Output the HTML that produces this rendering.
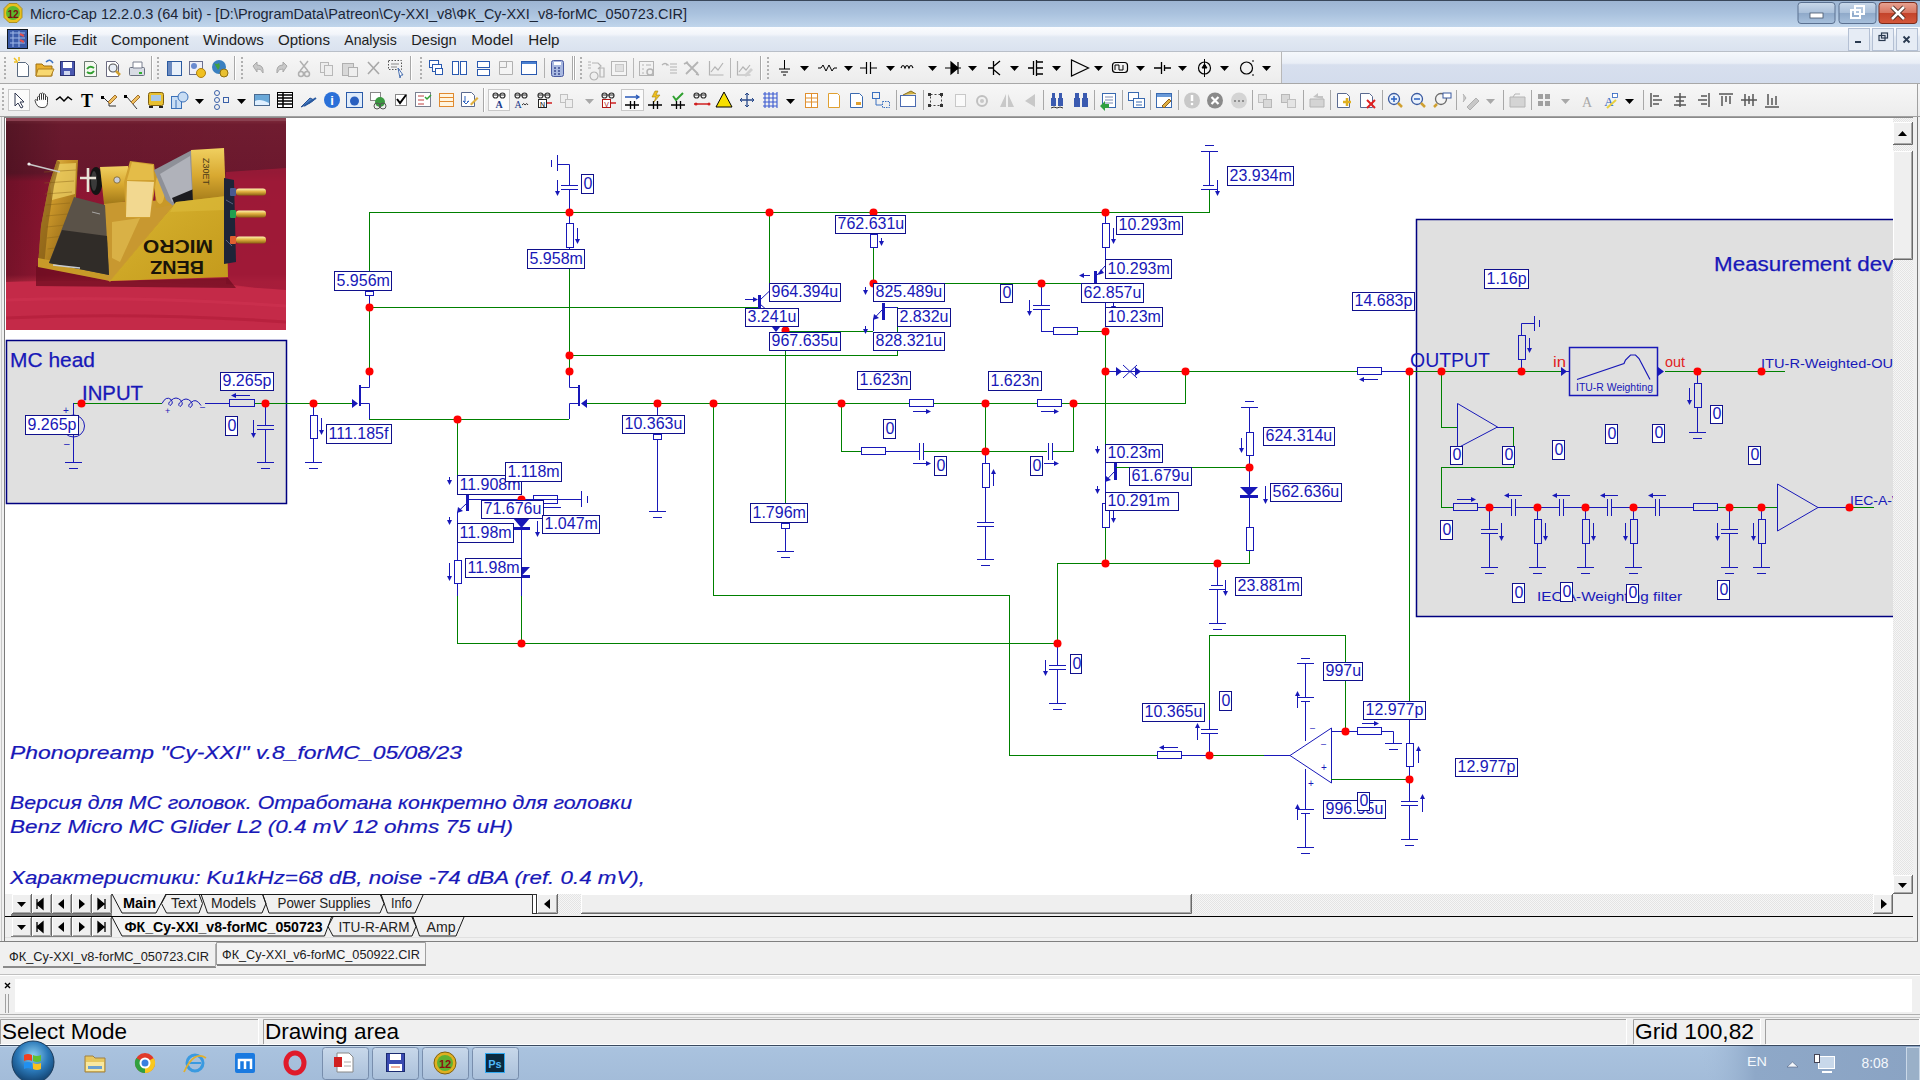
<!DOCTYPE html>
<html><head><meta charset="utf-8"><title>Micro-Cap</title>
<style>html,body{margin:0;padding:0;width:1920px;height:1080px;overflow:hidden;background:#f0f0f0}svg{position:absolute;left:0;top:0;display:block}</style>
</head><body>
<svg width="1920" height="1080" viewBox="0 0 1920 1080">
<defs>
<linearGradient id="gTitle" x1="0" y1="0" x2="0" y2="1"><stop offset="0" stop-color="#9cb4d2"/><stop offset="0.5" stop-color="#aac2de"/><stop offset="1" stop-color="#c0d5eb"/></linearGradient>
<linearGradient id="gMenu" x1="0" y1="0" x2="0" y2="1"><stop offset="0" stop-color="#fbfcfe"/><stop offset="0.3" stop-color="#f2f5fa"/><stop offset="0.42" stop-color="#e2e9f3"/><stop offset="1" stop-color="#dae2ef"/></linearGradient>
<linearGradient id="gTb" x1="0" y1="0" x2="0" y2="1"><stop offset="0" stop-color="#f7f7f7"/><stop offset="1" stop-color="#ececec"/></linearGradient>
<linearGradient id="gTbBlue" x1="0" y1="0" x2="0" y2="1"><stop offset="0" stop-color="#f5f8fc"/><stop offset="0.35" stop-color="#e9eef6"/><stop offset="0.4" stop-color="#d7dfee"/><stop offset="1" stop-color="#d3dcec"/></linearGradient>
<linearGradient id="gMin" x1="0" y1="0" x2="0" y2="1"><stop offset="0" stop-color="#c9d8ea"/><stop offset="0.5" stop-color="#a9bfd9"/><stop offset="0.51" stop-color="#8fa9c9"/><stop offset="1" stop-color="#a7c0dc"/></linearGradient>
<linearGradient id="gClose" x1="0" y1="0" x2="0" y2="1"><stop offset="0" stop-color="#e8a493"/><stop offset="0.5" stop-color="#d7745f"/><stop offset="0.51" stop-color="#c3432a"/><stop offset="1" stop-color="#d4583c"/></linearGradient>
<linearGradient id="gTask" x1="0" y1="0" x2="0" y2="1"><stop offset="0" stop-color="#aac3df"/><stop offset="1" stop-color="#a3bcd9"/></linearGradient>
<linearGradient id="gTray" x1="0" y1="0" x2="1" y2="0"><stop offset="0" stop-color="#a6bfdb" stop-opacity="0"/><stop offset="0.25" stop-color="#8ea8c8"/><stop offset="1" stop-color="#8aa3c3"/></linearGradient>
<linearGradient id="gTaskBtn" x1="0" y1="0" x2="0" y2="1"><stop offset="0" stop-color="#c8d8ea"/><stop offset="1" stop-color="#aac0da"/></linearGradient>
<radialGradient id="gOrb" cx="0.5" cy="0.35" r="0.6"><stop offset="0" stop-color="#8fd0f0"/><stop offset="0.6" stop-color="#2a78b8"/><stop offset="1" stop-color="#164a7a"/></radialGradient>
<pattern id="pDot" width="2" height="2" patternUnits="userSpaceOnUse"><rect width="2" height="2" fill="#f6f6f6"/><rect width="1" height="1" fill="#e4e4e4"/><rect x="1" y="1" width="1" height="1" fill="#e4e4e4"/></pattern>
</defs><rect x="0" y="0" width="1920" height="27" fill="url(#gTitle)" stroke="none" stroke-width="1" shape-rendering="crispEdges"/><line x1="0" y1="0.5" x2="1920" y2="0.5" stroke="#39475a" stroke-width="1" shape-rendering="crispEdges"/><path d="M9 3.5L17 3.5L22 8.5L22 17.5L17 22.5L9 22.5L4 17.5L4 8.5Z" fill="#e8c020" stroke="#a08010" stroke-width="0.8"/><circle cx="13" cy="13" r="7" fill="#5cb82c"/><text x="13" y="17.5" font-family='"Liberation Sans", sans-serif' font-size="10" fill="#7a1010" font-weight="bold" font-style="normal" text-anchor="middle">12</text><text x="30" y="19" font-family='"Liberation Sans", sans-serif' font-size="15" fill="#1b2536" font-weight="normal" font-style="normal" text-anchor="start" textLength="657" lengthAdjust="spacingAndGlyphs">Micro-Cap 12.2.0.3 (64 bit) - [D:\ProgramData\Patreon\Cy-XXI_v8\ФК_Cy-XXI_v8-forMC_050723.CIR]</text><rect x="1798" y="2.5" width="37" height="21" rx="3" fill="url(#gMin)" stroke="#5a7090" stroke-width="1"/><rect x="1810" y="13" width="13" height="5" fill="#fff" stroke="#44546a" stroke-width="0.8"/><rect x="1839" y="2.5" width="37" height="21" rx="3" fill="url(#gMin)" stroke="#5a7090" stroke-width="1"/><rect x="1851" y="10" width="9" height="8" fill="none" stroke="#fff" stroke-width="2"/><rect x="1855" y="6" width="9" height="8" fill="none" stroke="#fff" stroke-width="2"/><rect x="1879" y="2.5" width="38" height="21" rx="3" fill="url(#gClose)" stroke="#7a2a1a" stroke-width="1"/><path d="M1892 7L1904 19M1904 7L1892 19" stroke="#44291f" stroke-width="4.5"/><path d="M1892 7L1904 19M1904 7L1892 19" stroke="#ffffff" stroke-width="2.6"/><rect x="0" y="27" width="1920" height="24" fill="url(#gMenu)" stroke="none" stroke-width="1" shape-rendering="crispEdges"/><rect x="7.5" y="29.5" width="20" height="19" fill="#3a5aa8" stroke="#101820" stroke-width="1"/><path d="M10 33h15M10 38h15M10 43h15M13 31v16M19 31v16" stroke="#a0b8e8" stroke-width="1"/><path d="M20 34l4 2M20 40l4 2" stroke="#e05050" stroke-width="2"/><text x="34" y="45" font-family='"Liberation Sans", sans-serif' font-size="15" fill="#1e1e1e" font-weight="normal" font-style="normal" text-anchor="start" textLength="22.5" lengthAdjust="spacingAndGlyphs">File</text><text x="71.5" y="45" font-family='"Liberation Sans", sans-serif' font-size="15" fill="#1e1e1e" font-weight="normal" font-style="normal" text-anchor="start" textLength="25.25" lengthAdjust="spacingAndGlyphs">Edit</text><text x="111" y="45" font-family='"Liberation Sans", sans-serif' font-size="15" fill="#1e1e1e" font-weight="normal" font-style="normal" text-anchor="start" textLength="77.75" lengthAdjust="spacingAndGlyphs">Component</text><text x="203" y="45" font-family='"Liberation Sans", sans-serif' font-size="15" fill="#1e1e1e" font-weight="normal" font-style="normal" text-anchor="start" textLength="60.75" lengthAdjust="spacingAndGlyphs">Windows</text><text x="278" y="45" font-family='"Liberation Sans", sans-serif' font-size="15" fill="#1e1e1e" font-weight="normal" font-style="normal" text-anchor="start" textLength="52" lengthAdjust="spacingAndGlyphs">Options</text><text x="344.25" y="45" font-family='"Liberation Sans", sans-serif' font-size="15" fill="#1e1e1e" font-weight="normal" font-style="normal" text-anchor="start" textLength="52.5" lengthAdjust="spacingAndGlyphs">Analysis</text><text x="411.25" y="45" font-family='"Liberation Sans", sans-serif' font-size="15" fill="#1e1e1e" font-weight="normal" font-style="normal" text-anchor="start" textLength="45.5" lengthAdjust="spacingAndGlyphs">Design</text><text x="471.25" y="45" font-family='"Liberation Sans", sans-serif' font-size="15" fill="#1e1e1e" font-weight="normal" font-style="normal" text-anchor="start" textLength="42" lengthAdjust="spacingAndGlyphs">Model</text><text x="528.25" y="45" font-family='"Liberation Sans", sans-serif' font-size="15" fill="#1e1e1e" font-weight="normal" font-style="normal" text-anchor="start" textLength="31.25" lengthAdjust="spacingAndGlyphs">Help</text><rect x="1848.5" y="28.5" width="21" height="22" fill="#e6ecf5" stroke="#b4c0d4" stroke-width="1"/><rect x="1872.5" y="28.5" width="21" height="22" fill="#e6ecf5" stroke="#b4c0d4" stroke-width="1"/><rect x="1896.5" y="28.5" width="21" height="22" fill="#e6ecf5" stroke="#b4c0d4" stroke-width="1"/><rect x="1855" y="41" width="6" height="2" fill="#2a3a50"/><rect x="1879" y="35.5" width="6" height="5" fill="none" stroke="#2a3a50" stroke-width="1.2"/><rect x="1881.5" y="33" width="6" height="5" fill="none" stroke="#2a3a50" stroke-width="1.2"/><path d="M1903.5 36.5l6 6M1909.5 36.5l-6 6" stroke="#2a3a50" stroke-width="1.8"/><line x1="0" y1="51.5" x2="1920" y2="51.5" stroke="#b9bfc8" stroke-width="1" shape-rendering="crispEdges"/><rect x="0" y="52" width="1920" height="32" fill="url(#gTbBlue)" stroke="none" stroke-width="1" shape-rendering="crispEdges"/><rect x="0" y="52" width="1281" height="31" fill="url(#gTb)" stroke="none" stroke-width="1" shape-rendering="crispEdges"/><line x1="1281.5" y1="52" x2="1281.5" y2="83" stroke="#b8b8b8" stroke-width="1" shape-rendering="crispEdges"/><line x1="0" y1="83.5" x2="1920" y2="83.5" stroke="#a8a8a8" stroke-width="1" shape-rendering="crispEdges"/><rect x="4" y="57" width="2" height="2" fill="#b0b0b0"/><rect x="4" y="61" width="2" height="2" fill="#b0b0b0"/><rect x="4" y="65" width="2" height="2" fill="#b0b0b0"/><rect x="4" y="69" width="2" height="2" fill="#b0b0b0"/><rect x="4" y="73" width="2" height="2" fill="#b0b0b0"/><rect x="4" y="77" width="2" height="2" fill="#b0b0b0"/><path d="M17.5 62.5h8l3 3v11h-11z" fill="#fff" stroke="#5a6a80"/><path d="M14 58l3 3M19 57v4M14 62h4" stroke="#f0c020" stroke-width="1.5"/><path d="M36 64h6l2 2h8v10h-16z" fill="#e8b030" stroke="#a07010"/><path d="M38 69h16l-3 7h-15z" fill="#f8d870" stroke="#b08020"/><path d="M46 62q4 -4 7 1" fill="none" stroke="#3a70c0" stroke-width="1.5"/><rect x="60.5" y="61.5" width="14" height="14" fill="#4a58b0" stroke="#2a3070"/><rect x="63" y="62" width="9" height="6" fill="#fff"/><rect x="64" y="71" width="6" height="4" fill="#d0d8f0"/><path d="M84.5 61.5h9l3 3v12h-12z" fill="#f4f8f0" stroke="#6a7a70"/><path d="M87 69q3 -4 7 -1M94 71q-3 4 -7 1" fill="none" stroke="#30a030" stroke-width="2"/><path d="M106.5 61.5h9l3 3v12h-12z" fill="#fff" stroke="#6a6a80"/><circle cx="113" cy="68" r="4" fill="#e8eef8" stroke="#555" stroke-width="1.2"/><path d="M116 71l4 4" stroke="#d0a030" stroke-width="2.5"/><rect x="129.5" y="67.5" width="15" height="8" rx="1" fill="#d8dce4" stroke="#6a7080"/><path d="M133 62h9v6h-9z" fill="#fff" stroke="#7a8090"/><rect x="139" y="72" width="3" height="2" fill="#30b030"/><line x1="151.5" y1="56" x2="151.5" y2="80" stroke="#a8a8a8" stroke-width="1" shape-rendering="crispEdges"/><line x1="152.5" y1="56" x2="152.5" y2="80" stroke="#ffffff" stroke-width="1" shape-rendering="crispEdges"/><rect x="157" y="57" width="2" height="2" fill="#b0b0b0"/><rect x="157" y="61" width="2" height="2" fill="#b0b0b0"/><rect x="157" y="65" width="2" height="2" fill="#b0b0b0"/><rect x="157" y="69" width="2" height="2" fill="#b0b0b0"/><rect x="157" y="73" width="2" height="2" fill="#b0b0b0"/><rect x="157" y="77" width="2" height="2" fill="#b0b0b0"/><rect x="167.5" y="61.5" width="14" height="14" fill="#e8f0fa" stroke="#2a5aa0"/><rect x="168" y="62" width="4" height="13" fill="#6a8ac0"/><rect x="189.5" y="61.5" width="13" height="13" fill="#f0f0f8" stroke="#6a7090"/><circle cx="194" cy="66" r="3" fill="#6a8ad0"/><circle cx="201" cy="73" r="4.5" fill="#f0c020" stroke="#b08010"/><circle cx="219" cy="67" r="7" fill="#3a80c0"/><path d="M214 63q3 2 5 0q2 4 -1 7" fill="#40a040"/><circle cx="224" cy="73" r="4" fill="#e8c030" stroke="#907010"/><line x1="234.5" y1="56" x2="234.5" y2="80" stroke="#a8a8a8" stroke-width="1" shape-rendering="crispEdges"/><line x1="235.5" y1="56" x2="235.5" y2="80" stroke="#ffffff" stroke-width="1" shape-rendering="crispEdges"/><rect x="241" y="57" width="2" height="2" fill="#b0b0b0"/><rect x="241" y="61" width="2" height="2" fill="#b0b0b0"/><rect x="241" y="65" width="2" height="2" fill="#b0b0b0"/><rect x="241" y="69" width="2" height="2" fill="#b0b0b0"/><rect x="241" y="73" width="2" height="2" fill="#b0b0b0"/><rect x="241" y="77" width="2" height="2" fill="#b0b0b0"/><path d="M253 66l4-4v3q7 0 6 8q-2-5-6-4v3z" fill="#c8c8c8" stroke="#a8a8a8"/><path d="M287 66l-4-4v3q-7 0-6 8q2-5 6-4v3z" fill="#c8c8c8" stroke="#a8a8a8"/><path d="M300 61l8 10M308 61l-8 10" stroke="#b0b0b0" stroke-width="1.5"/><circle cx="301" cy="74" r="2.5" fill="none" stroke="#b0b0b0" stroke-width="1.5"/><circle cx="307" cy="74" r="2.5" fill="none" stroke="#b0b0b0" stroke-width="1.5"/><rect x="320.5" y="62.5" width="8" height="10" fill="#eee" stroke="#b8b8b8"/><rect x="324.5" y="65.5" width="8" height="10" fill="#eee" stroke="#b8b8b8"/><rect x="342.5" y="63.5" width="11" height="12" fill="#d8d8d8" stroke="#b0b0b0"/><rect x="348.5" y="67.5" width="9" height="9" fill="#eee" stroke="#b0b0b0"/><path d="M368 62l11 12M379 62l-11 12" stroke="#a8a8a8" stroke-width="1.6"/><rect x="388.5" y="60.5" width="13" height="9" fill="none" stroke="#555" stroke-dasharray="1.5 1.5"/><path d="M391 64h8M391 67h6" stroke="#888"/><path d="M398 68l5 7l-2 0l-1 3z" fill="#fff" stroke="#4a70b0"/><line x1="410.5" y1="56" x2="410.5" y2="80" stroke="#a8a8a8" stroke-width="1" shape-rendering="crispEdges"/><line x1="411.5" y1="56" x2="411.5" y2="80" stroke="#ffffff" stroke-width="1" shape-rendering="crispEdges"/><rect x="420" y="57" width="2" height="2" fill="#b0b0b0"/><rect x="420" y="61" width="2" height="2" fill="#b0b0b0"/><rect x="420" y="65" width="2" height="2" fill="#b0b0b0"/><rect x="420" y="69" width="2" height="2" fill="#b0b0b0"/><rect x="420" y="73" width="2" height="2" fill="#b0b0b0"/><rect x="420" y="77" width="2" height="2" fill="#b0b0b0"/><rect x="429.5" y="60.5" width="9" height="7" fill="#fff" stroke="#2a5ab0"/><rect x="432.5" y="64.5" width="9" height="7" fill="#fff" stroke="#2a5ab0"/><rect x="435.5" y="68.5" width="7" height="6" fill="#fff" stroke="#2a5ab0"/><rect x="452.5" y="61.5" width="6" height="13" fill="#fff" stroke="#2a5ab0"/><rect x="460.5" y="61.5" width="6" height="13" fill="#fff" stroke="#2a5ab0"/><rect x="477.5" y="61.5" width="12" height="6" fill="#fff" stroke="#2a5ab0"/><rect x="477.5" y="69.5" width="12" height="6" fill="#fff" stroke="#2a5ab0"/><path d="M499.5 61.5h13v13h-13z M499.5 67.5h7v-6" fill="#f4f4f4" stroke="#b0b0b0"/><rect x="521.5" y="61.5" width="15" height="13" fill="#fff" stroke="#2a5ab0"/><rect x="522" y="62" width="14" height="2" fill="#4a80d0"/><line x1="544.5" y1="58" x2="544.5" y2="78" stroke="#b0b0b0" stroke-width="1" shape-rendering="crispEdges"/><rect x="551.5" y="60.5" width="12" height="16" rx="2" fill="#a8b8e0" stroke="#4a5aa0"/><rect x="554" y="62" width="7" height="3" fill="#fff"/><path d="M554 68h2M558 68h2M554 71h2M558 71h2M554 74h2M558 74h2" stroke="#3a4a90" stroke-width="1.5"/><line x1="572.5" y1="56" x2="572.5" y2="80" stroke="#a8a8a8" stroke-width="1" shape-rendering="crispEdges"/><line x1="573.5" y1="56" x2="573.5" y2="80" stroke="#ffffff" stroke-width="1" shape-rendering="crispEdges"/><line x1="574.5" y1="56" x2="574.5" y2="80" stroke="#a8a8a8" stroke-width="1" shape-rendering="crispEdges"/><line x1="575.5" y1="56" x2="575.5" y2="80" stroke="#ffffff" stroke-width="1" shape-rendering="crispEdges"/><rect x="580" y="57" width="2" height="2" fill="#b0b0b0"/><rect x="580" y="61" width="2" height="2" fill="#b0b0b0"/><rect x="580" y="65" width="2" height="2" fill="#b0b0b0"/><rect x="580" y="69" width="2" height="2" fill="#b0b0b0"/><rect x="580" y="73" width="2" height="2" fill="#b0b0b0"/><rect x="580" y="77" width="2" height="2" fill="#b0b0b0"/><path d="M588 62h3M588 65h3M588 68h3M592 63h6l3 3l-3 3M594 72a4 4 0 1 0 0.1 0M600 68h4v9h-4z" fill="none" stroke="#b4b4b4" stroke-width="1.2"/><rect x="611.5" y="61.5" width="15" height="14" fill="#f4f4f4" stroke="#b4b4b4"/><rect x="615.5" y="64.5" width="8" height="7" fill="#e0e0e0" stroke="#c8c8c8"/><rect x="639.5" y="61.5" width="14" height="14" fill="none" stroke="#b4b4b4"/><path d="M642 65h2M646 65h5M642 69h2M642 73h2" stroke="#b4b4b4"/><circle cx="650" cy="72" r="3" fill="none" stroke="#b4b4b4" stroke-width="1.5"/><path d="M662 65q3-3 6 0l-2 0M670 64h7M670 67h7M670 70h7M670 73h7" fill="none" stroke="#b4b4b4" stroke-width="1.2"/><path d="M686 62l12 12M698 62l-12 12M684 64l4-2M696 74l3 1" stroke="#b4b4b4" stroke-width="1.8"/><path d="M709.5 61v14h14M711 72l4-5l3 3l5-7" fill="none" stroke="#b4b4b4" stroke-width="1.2"/><path d="M737.5 61v14h13M739 72l4-5l3 3l4-5" fill="none" stroke="#b4b4b4" stroke-width="1.2"/><path d="M744 75l7-7l2 2l-7 7z" fill="#d0d0d0"/><line x1="633.5" y1="58" x2="633.5" y2="78" stroke="#b8b8b8" stroke-width="1" shape-rendering="crispEdges"/><line x1="730.5" y1="58" x2="730.5" y2="78" stroke="#b8b8b8" stroke-width="1" shape-rendering="crispEdges"/><line x1="760.5" y1="56" x2="760.5" y2="80" stroke="#a8a8a8" stroke-width="1" shape-rendering="crispEdges"/><line x1="761.5" y1="56" x2="761.5" y2="80" stroke="#ffffff" stroke-width="1" shape-rendering="crispEdges"/><rect x="767" y="57" width="2" height="2" fill="#b0b0b0"/><rect x="767" y="61" width="2" height="2" fill="#b0b0b0"/><rect x="767" y="65" width="2" height="2" fill="#b0b0b0"/><rect x="767" y="69" width="2" height="2" fill="#b0b0b0"/><rect x="767" y="73" width="2" height="2" fill="#b0b0b0"/><rect x="767" y="77" width="2" height="2" fill="#b0b0b0"/><path d="M784.5 60v9M779 69h11M781 72h7M783 75h3" stroke="#000" stroke-width="1"/><path d="M800 66h9l-4.5 5z" fill="#000"/><path d="M818 68h3l2-3l3 6l3-6l3 6l2-3h3" fill="none" stroke="#000"/><path d="M844 66h9l-4.5 5z" fill="#000"/><path d="M860 68h6M866.5 62v12M870.5 62v12M871 68h6" stroke="#000" stroke-width="1.2"/><path d="M886 66h9l-4.5 5z" fill="#000"/><path d="M901 68q2-5 4 0q2-5 4 0q2-5 4 0" fill="none" stroke="#000" stroke-width="1.2"/><path d="M928 66h9l-4.5 5z" fill="#000"/><path d="M945 68h16M951 62v12l7-6z M958 62v12" stroke="#000" stroke-width="1.2" fill="#000"/><path d="M968 66h9l-4.5 5z" fill="#000"/><path d="M988 68h5M993.5 61v14M994 66l6-5M994 70l6 5" stroke="#000" stroke-width="1.3" fill="none"/><path d="M1010 66h9l-4.5 5z" fill="#000"/><path d="M1028 68h5M1033.5 61v14M1036.5 60v16M1037 62h6M1037 68h6M1037 74h6" stroke="#000" stroke-width="1.3" fill="none"/><path d="M1052 66h9l-4.5 5z" fill="#000"/><path d="M1071.5 60v16l17-8z" fill="none" stroke="#000" stroke-width="1.2"/><path d="M1094 66h9l-4.5 5z" fill="#000"/><rect x="1112.5" y="62.5" width="15" height="10" rx="3" fill="none" stroke="#000" stroke-width="1.2"/><path d="M1115 70v-5h4v5h4v-5" fill="none" stroke="#000"/><path d="M1136 66h9l-4.5 5z" fill="#000"/><path d="M1154 68h7M1161.5 62v12M1164.5 65v6M1165 68h6" stroke="#000" stroke-width="1.3"/><path d="M1178 66h9l-4.5 5z" fill="#000"/><circle cx="1204.5" cy="68" r="6" fill="none" stroke="#000" stroke-width="1.2"/><path d="M1204.5 59v18M1202 68l2.5-4l2.5 4z" stroke="#000" fill="#000"/><path d="M1220 66h9l-4.5 5z" fill="#000"/><circle cx="1246.5" cy="68" r="6" fill="none" stroke="#000" stroke-width="1.2"/><path d="M1252 61h2M1252 75h2" stroke="#000"/><path d="M1262 66h9l-4.5 5z" fill="#000"/><rect x="0" y="84" width="1920" height="33" fill="url(#gTb)" stroke="none" stroke-width="1" shape-rendering="crispEdges"/><line x1="1917.5" y1="84" x2="1917.5" y2="116" stroke="#a0a0a0" stroke-width="1" shape-rendering="crispEdges"/><line x1="0" y1="116.5" x2="1920" y2="116.5" stroke="#a0a0a0" stroke-width="1" shape-rendering="crispEdges"/><rect x="2" y="88" width="2" height="2" fill="#b0b0b0"/><rect x="2" y="92" width="2" height="2" fill="#b0b0b0"/><rect x="2" y="96" width="2" height="2" fill="#b0b0b0"/><rect x="2" y="100" width="2" height="2" fill="#b0b0b0"/><rect x="2" y="104" width="2" height="2" fill="#b0b0b0"/><rect x="2" y="108" width="2" height="2" fill="#b0b0b0"/><rect x="8.5" y="89.5" width="21" height="21" fill="#fbfbfb" stroke="#c8c8c8"/><path d="M15 93v13l3-3l3 5l2-1l-3-5h4z" fill="#fff" stroke="#303850"/><path d="M37.5 100.5v-3.5q1-1.2 2 0v3M39.5 99v-5q1-1.2 2 0v5.5M41.5 99.5v-6q1-1.2 2 0v6M43.5 99.5v-5q1-1.2 2 0v5.5M45.5 100v-3q1-1.2 2 0v5.5q0 5-4.5 5h-2q-3.5 0-5-4l-1-3q0-1.2 1.5-0.8l1 1.3" fill="#fff" stroke="#333" stroke-width="0.9"/><path d="M56 100l4-3l4 4l4-4l4 3" fill="none" stroke="#000" stroke-width="1.5"/><text x="87" y="107" font-family='"Liberation Serif", serif' font-size="18" fill="#000" font-weight="bold" font-style="normal" text-anchor="middle">T</text><path d="M101 96h3v3h-3z" fill="#000"/><path d="M104 98l5 5v3h7" fill="none" stroke="#333"/><path d="M108 102l7-7l2 2l-7 7z" fill="#f0c060" stroke="#a07030"/><path d="M124 95h3v3h-3z" fill="#000"/><path d="M127 97l10 12" fill="none" stroke="#333"/><path d="M131 102l7-7l2 2l-7 7z" fill="#f0c060" stroke="#a07030"/><rect x="148.5" y="92.5" width="15" height="13" rx="2" fill="#e8c030" stroke="#806010"/><rect x="151" y="95" width="10" height="6" fill="#a8c8e8"/><path d="M149 107h4M159 107h4" stroke="#222" stroke-width="2"/><rect x="171.5" y="96.5" width="10" height="12" fill="#c8ddf4" stroke="#3a70b8"/><circle cx="183" cy="97" r="5" fill="#c8ddf4" stroke="#3a70b8"/><path d="M176 100v8" stroke="#3a70b8"/><path d="M195 99h9l-4.5 5z" fill="#000"/><circle cx="217" cy="93" r="2.5" fill="none" stroke="#3a60a8"/><circle cx="217" cy="107" r="2.5" fill="none" stroke="#3a60a8"/><circle cx="217" cy="100" r="2.5" fill="none" stroke="#3a60a8"/><rect x="223.5" y="97.5" width="5" height="5" fill="none" stroke="#3a60a8"/><path d="M237 99h9l-4.5 5z" fill="#000"/><rect x="254.5" y="94.5" width="15" height="11" fill="#6aa8d8" stroke="#4a6a90"/><path d="M255 101q5-3 14 2v2h-14z" fill="#e0f0ff"/><rect x="277.5" y="92.5" width="15" height="15" fill="#fff" stroke="#000"/><path d="M278 95h14M278 98h14M278 101h14M278 104h14M283 93v14" stroke="#000" stroke-width="1.5"/><path d="M301 107l9-9l4 2l-4 3z" fill="#4a80c8" stroke="#2a5090"/><path d="M304 106l12-8" stroke="#2a5aa0" stroke-width="2"/><circle cx="332" cy="100" r="8" fill="#2a70d8"/><text x="332" y="105" font-family='"Liberation Sans", sans-serif' font-size="13" fill="#fff" font-weight="bold" font-style="normal" text-anchor="middle">i</text><rect x="346.5" y="92.5" width="16" height="15" fill="#e0ecfa" stroke="#2a5aa8"/><circle cx="354.5" cy="101" r="4.5" fill="#2a60c0"/><rect x="370.5" y="92.5" width="10" height="8" fill="#fff" stroke="#888"/><circle cx="380" cy="102" r="5" fill="#3a9a40"/><circle cx="377" cy="106" r="3" fill="none" stroke="#555"/><circle cx="383" cy="106" r="3" fill="none" stroke="#555"/><rect x="395.5" y="94.5" width="11" height="11" fill="#fff" stroke="#888"/><path d="M397 99l3 4l6-8" fill="none" stroke="#000" stroke-width="2"/><rect x="415.5" y="92.5" width="15" height="14" fill="#fff" stroke="#7a8090"/><path d="M418 96h6M418 100h6M418 104h6" stroke="#c04040"/><path d="M425 97l2 2l4-4" stroke="#30a030" fill="none" stroke-width="1.5"/><rect x="439.5" y="93.5" width="14" height="13" fill="#fff5e0" stroke="#e08a30"/><path d="M440 97.5h13M440 101.5h13" stroke="#e08a30"/><path d="M461.5 92.5h10l3 3v11h-13z" fill="#fff" stroke="#5a6a90"/><path d="M465 96v6l-2-1 3 3 3-3-2 1" stroke="#2a60c0" fill="none"/><path d="M470 104l7-7l1.5 1.5l-7 7z" fill="#e0b040"/><line x1="483.5" y1="88" x2="483.5" y2="112" stroke="#a8a8a8" stroke-width="1" shape-rendering="crispEdges"/><line x1="484.5" y1="88" x2="484.5" y2="112" stroke="#ffffff" stroke-width="1" shape-rendering="crispEdges"/><rect x="488.5" y="89.5" width="21" height="21" fill="#fbfbfb" stroke="#c8c8c8"/><path d="M493 95h12" stroke="#333"/><circle cx="495.5" cy="95.5" r="2.5" fill="none" stroke="#333" stroke-width="1.2"/><circle cx="502.5" cy="95.5" r="2.5" fill="none" stroke="#333" stroke-width="1.2"/><text x="499" y="108" font-family='"Liberation Serif", serif' font-size="10" fill="#1a3a8a" font-weight="bold" font-style="normal" text-anchor="middle">A</text><path d="M515 95h12" stroke="#333"/><circle cx="517.5" cy="95.5" r="2.5" fill="none" stroke="#333" stroke-width="1.2"/><circle cx="524.5" cy="95.5" r="2.5" fill="none" stroke="#333" stroke-width="1.2"/><text x="518" y="108" font-family='"Liberation Serif", serif' font-size="10" fill="#1a3a8a" font-weight="normal" font-style="normal" text-anchor="middle">A</text><path d="M522 105q2-3 3 0q2-3 3 0" stroke="#333" fill="none"/><path d="M538 95h12" stroke="#333"/><circle cx="540.5" cy="95.5" r="2.5" fill="none" stroke="#333" stroke-width="1.2"/><circle cx="547.5" cy="95.5" r="2.5" fill="none" stroke="#333" stroke-width="1.2"/><rect x="538.5" y="99.5" width="8" height="8" fill="#fff" stroke="#222"/><text x="542.5" y="106.5" font-family='"Liberation Sans", sans-serif' font-size="7" fill="#000" font-weight="normal" font-style="normal" text-anchor="middle">N</text><path d="M547 103h5" stroke="#d02020" stroke-width="1.5"/><rect x="560.5" y="94.5" width="7" height="8" fill="#eee" stroke="#c0c0c0"/><rect x="565.5" y="99.5" width="7" height="8" fill="#eee" stroke="#c0c0c0"/><path d="M585 99h9l-4.5 5z" fill="#a8a8a8"/><path d="M602 95h12" stroke="#333"/><circle cx="604.5" cy="95.5" r="2.5" fill="none" stroke="#333" stroke-width="1.2"/><circle cx="611.5" cy="95.5" r="2.5" fill="none" stroke="#333" stroke-width="1.2"/><rect x="602.5" y="99.5" width="8" height="8" fill="#fff" stroke="#b01818"/><text x="606.5" y="106.5" font-family='"Liberation Sans", sans-serif' font-size="7" fill="#b01818" font-weight="normal" font-style="normal" text-anchor="middle">V</text><path d="M611 103h5" stroke="#d02020" stroke-width="1.5"/><rect x="621.5" y="89.5" width="22" height="21" fill="#fbfbfb" stroke="#c8c8c8"/><path d="M625 97h14M636 95l3 2l-3 2" stroke="#2a5ab8" fill="none" stroke-width="1.3"/><path d="M625 105h14M630.5 101v8M634.5 101v8" stroke="#000" stroke-width="1.3"/><path d="M648 105h14M653.5 101v8M657.5 101v8" stroke="#000" stroke-width="1.3"/><path d="M655 91l-3 6h4l-2 5l6-7h-4l2-4z" fill="#f0c020" stroke="#a08010" stroke-width="0.6"/><path d="M671 105h14M676.5 101v8M680.5 101v8" stroke="#000" stroke-width="1.3"/><path d="M673 96l3 4l7-7" fill="none" stroke="#30a030" stroke-width="2"/><path d="M694 95h12" stroke="#333"/><circle cx="696.5" cy="95.5" r="2.5" fill="none" stroke="#333" stroke-width="1.2"/><circle cx="703.5" cy="95.5" r="2.5" fill="none" stroke="#333" stroke-width="1.2"/><path d="M694 104h16" stroke="#d02020" stroke-width="1.5"/><circle cx="696" cy="104" r="1.5" fill="#d02020"/><circle cx="709" cy="104" r="1.5" fill="#d02020"/><path d="M724 92l8 15h-16z" fill="#f8e000" stroke="#000" stroke-width="1"/><path d="M747 93v14M740 100h14" stroke="#2a4a8a" stroke-width="1.3"/><path d="M745 95l2-2l2 2M745 105l2 2l2-2M742 98l-2 2l2 2M752 98l2 2l-2 2" fill="none" stroke="#2a4a8a"/><path d="M763 94h14M763 98h14M763 102h14M763 106h14M765 92v16M769 92v16M773 92v16M777 92v16" stroke="#3a5ad0" stroke-width="1.1"/><path d="M786 99h9l-4.5 5z" fill="#000"/><rect x="805.5" y="93.5" width="12" height="14" fill="#fff" stroke="#e09030"/><path d="M806 98h11M806 102h11M811.5 94v13" stroke="#e09030"/><path d="M828.5 93.5h9l2 2v12h-11z" fill="#fff" stroke="#e0a030"/><path d="M850.5 93.5h9l3 3v11h-12z" fill="#fff" stroke="#3a6ab0"/><rect x="856" y="102" width="5" height="3" fill="#e0a030"/><rect x="872.5" y="92.5" width="7" height="6" fill="none" stroke="#3a70c0"/><rect x="882.5" y="101.5" width="7" height="6" fill="none" stroke="#3a70c0" stroke-dasharray="1.5 1"/><path d="M876 99v6h6" fill="none" stroke="#3a70c0"/><line x1="896.5" y1="90" x2="896.5" y2="110" stroke="#a8a8a8" stroke-width="1" shape-rendering="crispEdges"/><rect x="900.5" y="95.5" width="15" height="11" fill="#fff" stroke="#4a6ab0"/><path d="M903 95l8-4l5 3" fill="#d0b040" stroke="#8a7020"/><line x1="923.5" y1="90" x2="923.5" y2="110" stroke="#a8a8a8" stroke-width="1" shape-rendering="crispEdges"/><rect x="930.5" y="94.5" width="11" height="11" fill="none" stroke="#444" stroke-dasharray="2 2"/><path d="M928 93h3v3h-3zM940 93h3v3h-3zM928 104h3v3h-3zM940 104h3v3h-3z" fill="#333"/><rect x="955.5" y="94.5" width="10" height="12" fill="#fafafa" stroke="#c8c8c8"/><circle cx="982" cy="101" r="5" fill="none" stroke="#c0c0c0" stroke-width="2"/><circle cx="982" cy="101" r="2" fill="#c8c8c8"/><path d="M1006 94v13h-6zM1008 94v13h6z" fill="#c8c8c8"/><path d="M1035 94v13l-10-6zM1035 98h-6" fill="#c8c8c8"/><line x1="1043.5" y1="90" x2="1043.5" y2="110" stroke="#a8a8a8" stroke-width="1" shape-rendering="crispEdges"/><path d="M1051 98h5v8h-5zM1058 98h5v8h-5zM1052 93h3v5h-3zM1059 93h3v5h-3z" fill="#3a5ab0"/><path d="M1051 108q3-2 6 0q3-2 6 0" stroke="#333" fill="none"/><path d="M1074 98h6v9h-6zM1082 98h6v9h-6zM1075 93h4v5h-4zM1083 93h4v5h-4z" fill="#3a5ab0"/><line x1="1094.5" y1="90" x2="1094.5" y2="110" stroke="#a8a8a8" stroke-width="1" shape-rendering="crispEdges"/><rect x="1102.5" y="93.5" width="13" height="14" fill="#fff" stroke="#3a6ab0"/><path d="M1105 97h8M1105 100h8M1105 103h8" stroke="#7a8ab0"/><path d="M1100 106l5-5v3h4v4h-4v3z" fill="#30a040"/><line x1="1122.5" y1="90" x2="1122.5" y2="110" stroke="#a8a8a8" stroke-width="1" shape-rendering="crispEdges"/><rect x="1128.5" y="92.5" width="10" height="8" fill="#fff" stroke="#3a6ab0"/><rect x="1133.5" y="98.5" width="11" height="9" fill="#fff" stroke="#3a6ab0"/><path d="M1136 102h6M1136 105h6" stroke="#3a6ab0"/><line x1="1150.5" y1="90" x2="1150.5" y2="110" stroke="#a8a8a8" stroke-width="1" shape-rendering="crispEdges"/><rect x="1156.5" y="93.5" width="15" height="14" fill="#fff" stroke="#3a6ab0"/><rect x="1157" y="94" width="14" height="3" fill="#6a9ad8"/><path d="M1162 106l7-7l2 2l-7 7z" fill="#e0b040" stroke="#906020"/><line x1="1178.5" y1="90" x2="1178.5" y2="110" stroke="#a8a8a8" stroke-width="1" shape-rendering="crispEdges"/><circle cx="1192" cy="100.5" r="8" fill="#c8c8c8"/><path d="M1192 95v6" stroke="#fff" stroke-width="2.5"/><circle cx="1192" cy="104" r="1.3" fill="#fff"/><circle cx="1215" cy="100.5" r="8" fill="#8a8a8a"/><path d="M1211.5 97l7 7M1218.5 97l-7 7" stroke="#fff" stroke-width="2.2"/><circle cx="1239" cy="100.5" r="8" fill="#d4d4d4"/><path d="M1234 101h2M1238 101h2M1242 101h2" stroke="#909090" stroke-width="2"/><line x1="1252.5" y1="90" x2="1252.5" y2="110" stroke="#a8a8a8" stroke-width="1" shape-rendering="crispEdges"/><rect x="1258.5" y="94.5" width="8" height="8" fill="#e4e4e4" stroke="#c0c0c0"/><rect x="1263.5" y="99.5" width="8" height="8" fill="#d8d8d8" stroke="#b8b8b8"/><rect x="1281.5" y="94.5" width="8" height="8" fill="#d8d8d8" stroke="#b8b8b8"/><rect x="1287.5" y="99.5" width="8" height="8" fill="#e4e4e4" stroke="#c0c0c0"/><line x1="1303.5" y1="90" x2="1303.5" y2="110" stroke="#a8a8a8" stroke-width="1" shape-rendering="crispEdges"/><path d="M1310 99h14v8h-14z" fill="#d4d4d4" stroke="#b4b4b4"/><path d="M1313 97l5-4v3h5v3" fill="#c4c4c4"/><line x1="1330.5" y1="90" x2="1330.5" y2="110" stroke="#a8a8a8" stroke-width="1" shape-rendering="crispEdges"/><path d="M1337.5 93.5h9l3 3v11h-12z" fill="#fff" stroke="#5a6a90"/><path d="M1347 98v8M1343 102h8" stroke="#e0b020" stroke-width="2.5"/><path d="M1360.5 93.5h9l3 3v11h-12z" fill="#fff" stroke="#5a6a90"/><path d="M1367 100l8 8M1375 100l-8 8" stroke="#e02020" stroke-width="2"/><line x1="1382.5" y1="90" x2="1382.5" y2="110" stroke="#a8a8a8" stroke-width="1" shape-rendering="crispEdges"/><circle cx="1394" cy="99" r="5.5" fill="#eaf2fc" stroke="#3a5aa0" stroke-width="1.3"/><path d="M1391 99h6M1394 96v6" stroke="#2a60c0" stroke-width="1.5"/><path d="M1398 103l4 4" stroke="#d0a030" stroke-width="2.5"/><circle cx="1417" cy="99" r="5.5" fill="#eaf2fc" stroke="#3a5aa0" stroke-width="1.3"/><path d="M1414 99h6" stroke="#2a60c0" stroke-width="1.5"/><path d="M1421 103l4 4" stroke="#d0a030" stroke-width="2.5"/><circle cx="1441" cy="99" r="5.5" fill="#f4f4f4" stroke="#6a6a6a" stroke-width="1.3"/><rect x="1443" y="93" width="8" height="5" fill="#fff" stroke="#3a5aa0"/><path d="M1437 104l-3 3" stroke="#d0a030" stroke-width="2.5"/><line x1="1456.5" y1="90" x2="1456.5" y2="110" stroke="#a8a8a8" stroke-width="1" shape-rendering="crispEdges"/><path d="M1463 94l3 4l-3 4M1467 107l9-9l3 3l-9 9z" fill="#c8c8c8" stroke="#b0b0b0"/><path d="M1486 99h9l-4.5 5z" fill="#a8a8a8"/><line x1="1503.5" y1="90" x2="1503.5" y2="110" stroke="#a8a8a8" stroke-width="1" shape-rendering="crispEdges"/><path d="M1510 97h15v10h-15z" fill="#d4d4d4" stroke="#b4b4b4"/><path d="M1513 97l2-3h5" fill="none" stroke="#b4b4b4"/><line x1="1531.5" y1="90" x2="1531.5" y2="110" stroke="#a8a8a8" stroke-width="1" shape-rendering="crispEdges"/><path d="M1538 94h5v5h-5zM1545 94h5v5h-5zM1538 101h5v5h-5zM1545 101h5v5h-5z" fill="#a0a0a0"/><path d="M1561 99h9l-4.5 5z" fill="#a8a8a8"/><text x="1587" y="107" font-family='"Liberation Serif", serif' font-size="14" fill="#a8a8a8" font-weight="normal" font-style="normal" text-anchor="middle">A</text><text x="1609" y="106" font-family='"Liberation Serif", serif' font-size="13" fill="#2a60c0" font-weight="normal" font-style="normal" text-anchor="middle">A</text><rect x="1612.5" y="93.5" width="5" height="4" fill="#fff" stroke="#2a60c0" stroke-width="0.8"/><path d="M1607 108l9-8" stroke="#e8d040" stroke-width="2"/><path d="M1625 99h9l-4.5 5z" fill="#000"/><line x1="1643.5" y1="90" x2="1643.5" y2="110" stroke="#a8a8a8" stroke-width="1" shape-rendering="crispEdges"/><path d="M1651 93v14M1653 96h6M1653 100h9M1653 104h6" stroke="#555" stroke-width="1.5"/><path d="M1680 93v14M1674 97h12M1676 101h8M1674 105h12" stroke="#555" stroke-width="1.5"/><path d="M1709 93v14M1701 96h6M1698 100h9M1701 104h6" stroke="#555" stroke-width="1.5"/><path d="M1719 94h14M1722 96v10M1726 96v6M1730 96v8" stroke="#555" stroke-width="1.5"/><path d="M1741 100h16M1745 94v12M1749 96v8M1753 94v12" stroke="#555" stroke-width="1.5"/><path d="M1765 107h14M1768 94v11M1772 98v7M1776 96v9" stroke="#555" stroke-width="1.5"/><rect x="0" y="117" width="1920" height="850" fill="#f0f0f0" stroke="none" stroke-width="1" shape-rendering="crispEdges"/><line x1="1.5" y1="117" x2="1.5" y2="967" stroke="#c8c8c8" stroke-width="1" shape-rendering="crispEdges"/><line x1="4.5" y1="117" x2="4.5" y2="941" stroke="#7a7a7a" stroke-width="1" shape-rendering="crispEdges"/><rect x="5" y="118" width="1888" height="776" fill="#ffffff" stroke="none" stroke-width="1" shape-rendering="crispEdges"/><line x1="5" y1="117.5" x2="1913" y2="117.5" stroke="#8a8a8a" stroke-width="1" shape-rendering="crispEdges"/><line x1="1917.5" y1="117" x2="1917.5" y2="942" stroke="#7a7a7a" stroke-width="1" shape-rendering="crispEdges"/><defs>
<linearGradient id="phBg" x1="0" y1="0" x2="0" y2="1">
<stop offset="0" stop-color="#843040"/><stop offset="0.03" stop-color="#701c30"/><stop offset="0.26" stop-color="#6c182e"/><stop offset="0.3" stop-color="#921634"/><stop offset="0.74" stop-color="#9c1836"/><stop offset="0.77" stop-color="#c02844"/><stop offset="1" stop-color="#c42c4a"/>
</linearGradient>
<linearGradient id="phLeft" x1="0" y1="0" x2="1" y2="0"><stop offset="0" stop-color="#000" stop-opacity="0.25"/><stop offset="0.2" stop-color="#000" stop-opacity="0.05"/><stop offset="1" stop-color="#000" stop-opacity="0"/></linearGradient>
<linearGradient id="gold1" x1="0" y1="0" x2="1" y2="1"><stop offset="0" stop-color="#f0d060"/><stop offset="0.4" stop-color="#c89428"/><stop offset="1" stop-color="#7a5410"/></linearGradient>
<linearGradient id="gold2" x1="0" y1="0" x2="0" y2="1"><stop offset="0" stop-color="#f0d060"/><stop offset="0.5" stop-color="#d8a830"/><stop offset="1" stop-color="#a07818"/></linearGradient>
<linearGradient id="goldPlate" x1="0" y1="0" x2="1" y2="1"><stop offset="0" stop-color="#d8b430"/><stop offset="1" stop-color="#c49a1c"/></linearGradient>
<linearGradient id="pin" x1="0" y1="0" x2="0" y2="1"><stop offset="0" stop-color="#fff4b0"/><stop offset="0.45" stop-color="#e0b040"/><stop offset="1" stop-color="#8a6010"/></linearGradient>
<clipPath id="phClip"><rect x="6" y="118" width="280" height="212"/></clipPath>
</defs><g clip-path="url(#phClip)"><rect x="6" y="118" width="280" height="212" fill="url(#phBg)"/><rect x="6" y="118" width="280" height="212" fill="url(#phLeft)"/><rect x="6" y="118" width="280" height="3" fill="#8a4050"/><path d="M226 172L286 168V292L226 284Z" fill="#a01a38" opacity="0.8"/><path d="M6 282Q120 278 286 290V330H6Z" fill="#c42a48"/><path d="M6 300Q140 296 286 306" stroke="#d83a5a" stroke-width="3" fill="none" opacity="0.35"/><path d="M6 318Q140 312 286 322" stroke="#a81430" stroke-width="3" fill="none" opacity="0.4"/><path d="M36 266L110 281L228 278L236 288L36 286Z" fill="#6a0c1e" opacity="0.7"/><path d="M57 160L78 160L76 196L74 230L50 264L38 266L41 226L49 185Z" fill="url(#gold1)"/><path d="M58 164L76 163L75 194L52 200L50 186Z" fill="#f0d468" opacity="0.7"/><path d="M44.0 172L76 170" stroke="#8a6418" stroke-width="1" opacity="0.45"/><path d="M44.5 183L74 181" stroke="#8a6418" stroke-width="1" opacity="0.45"/><path d="M45.0 194L72 192" stroke="#8a6418" stroke-width="1" opacity="0.45"/><path d="M45.5 205L70 203" stroke="#8a6418" stroke-width="1" opacity="0.45"/><path d="M46.0 216L68 214" stroke="#8a6418" stroke-width="1" opacity="0.45"/><path d="M46.5 227L66 225" stroke="#8a6418" stroke-width="1" opacity="0.45"/><path d="M47.0 238L64 236" stroke="#8a6418" stroke-width="1" opacity="0.45"/><path d="M47.5 249L62 247" stroke="#8a6418" stroke-width="1" opacity="0.45"/><path d="M57 160L49 185L41 226L38 266L44 266L48 226L54 186L60 162Z" fill="#7a5414" opacity="0.6"/><path d="M38 258L110 272L110 281L38 267Z" fill="#c89a28"/><path d="M104 202L178 200L110 282L104 276Z" fill="#c89830"/><path d="M112 222L140 218L120 262L112 258Z" fill="#e0bc50" opacity="0.7"/><path d="M74 197L105 205L109 275L49 263Z" fill="#5a5248"/><path d="M62 230L107 236L109 275L49 263Z" fill="#302c28"/><path d="M53 265L80 268" stroke="#c8ccd0" stroke-width="1.5"/><path d="M92 212L100 214" stroke="#bbb" stroke-width="0.8"/><ellipse cx="96" cy="181" rx="6.5" ry="14" fill="#141414"/><ellipse cx="94" cy="181" rx="3" ry="10" fill="#3a3a3a"/><path d="M80 178L96 178M88 168L88 192" stroke="#e8e4d8" stroke-width="2.6"/><path d="M100 167L128 166L130 201L104 204Z" fill="url(#gold2)"/><circle cx="117" cy="180" r="3.2" fill="#c8ccd8" stroke="#7a6020" stroke-width="0.8"/><path d="M130 161L154 164L156 182L150 218L126 218L124 182Z" fill="#d0a030"/><path d="M127 181L154 182L150 217L126 217Z" fill="#f2d890"/><path d="M132 162L153 165L154 180L127 180Z" fill="#e4bc48"/><path d="M154 172L174 170L178 204L156 208Z" fill="#c89828"/><ellipse cx="160" cy="189" rx="5" ry="15" fill="#e0b440"/><path d="M154 170L192 150L196 196L178 210L166 200Z" fill="#8e9098"/><path d="M160 174L190 156L192 192L172 202Z" fill="#b0b2ba"/><path d="M172 198L196 188L198 206L178 212Z" fill="#1c1c20"/><path d="M191 150L224 148L226 200L193 204Z" fill="url(#gold2)"/><text x="0" y="0" transform="translate(203,158) rotate(90)" font-family="'Liberation Sans', sans-serif" font-size="9" fill="#4a3a18">Z30ET</text><path d="M110 281L176 202L226 196L228 277Z" fill="url(#goldPlate)"/><path d="M176 202L226 196L226 210L170 212Z" fill="#e0c040" opacity="0.5"/><text transform="translate(213,240) rotate(180)" font-family="'Liberation Sans', sans-serif" font-size="19" font-weight="bold" fill="#1a1408" textLength="70" lengthAdjust="spacingAndGlyphs">MICRO</text><text transform="translate(204,261) rotate(180)" font-family="'Liberation Sans', sans-serif" font-size="19" font-weight="bold" fill="#1a1408" textLength="54" lengthAdjust="spacingAndGlyphs">BENZ</text><path d="M224 178L234 180L236 262L224 264Z" fill="#1e2438"/><path d="M226 200L233 204M226 240L232 246" stroke="#5a6080" stroke-width="1"/><rect x="230" y="188" width="6" height="8" rx="1" fill="#4a5a90"/><rect x="236" y="188.5" width="30" height="7" rx="3" fill="url(#pin)"/><rect x="230" y="210" width="6" height="8" rx="1" fill="#20a050"/><rect x="236" y="210.5" width="30" height="7" rx="3" fill="url(#pin)"/><rect x="230" y="236" width="6" height="8" rx="1" fill="#e06030"/><rect x="236" y="236.5" width="30" height="7" rx="3" fill="url(#pin)"/><path d="M28 164L60 172" stroke="#c8c8c8" stroke-width="1.6"/><circle cx="29" cy="164" r="1.6" fill="#eee"/></g><clipPath id="cvClip"><rect x="5" y="118" width="1888" height="776"/></clipPath><g clip-path="url(#cvClip)"><polyline points="369,212 1105,212" fill="none" stroke="#008000" stroke-width="1" shape-rendering="crispEdges"/><rect x="6.5" y="340.5" width="280" height="163" fill="#e0e0e0" stroke="#000080" stroke-width="1.5"/><rect x="1416.5" y="219.5" width="500" height="397" fill="#e0e0e0" stroke="#000080" stroke-width="1.5"/><polyline points="73,403 162,403" fill="none" stroke="#008000" stroke-width="1" shape-rendering="crispEdges"/><line x1="73.5" y1="403" x2="73.5" y2="462" stroke="#1818b8" stroke-width="1" shape-rendering="crispEdges"/><circle cx="73.5" cy="426" r="11" fill="none" stroke="#1818b8" stroke-width="1"/><text x="63" y="414" font-family='"Liberation Sans", sans-serif' font-size="10" fill="#1818b8" font-weight="normal" font-style="normal" text-anchor="start">+</text><text x="64" y="447" font-family='"Liberation Sans", sans-serif' font-size="10" fill="#1818b8" font-weight="normal" font-style="normal" text-anchor="start">–</text><line x1="65" y1="462.5" x2="82" y2="462.5" stroke="#1818b8" stroke-width="1" shape-rendering="crispEdges"/><line x1="69" y1="468.5" x2="78" y2="468.5" stroke="#1818b8" stroke-width="1" shape-rendering="crispEdges"/><path d="M162 403.5q4-8 9-4q3 4 -1 6q-3 -2 1 -5q5-5 10 0q3 4 -1 6q-3 -2 1 -5q5-5 10 0q3 4 -1 6q-3 -2 1 -5q5-5 10 3" fill="none" stroke="#1818b8" stroke-width="1"/><text x="165" y="414" font-family='"Liberation Sans", sans-serif' font-size="9" fill="#1818b8" font-weight="normal" font-style="normal" text-anchor="start">+</text><text x="200" y="410" font-family='"Liberation Sans", sans-serif' font-size="9" fill="#1818b8" font-weight="normal" font-style="normal" text-anchor="start">–</text><polyline points="205,403 229,403" fill="none" stroke="#1818b8" stroke-width="1" shape-rendering="crispEdges"/><rect x="229.5" y="399.5" width="25" height="7" fill="none" stroke="#1818b8" stroke-width="1" shape-rendering="crispEdges"/><line x1="235" y1="395.5" x2="250" y2="395.5" stroke="#1818b8" stroke-width="1" shape-rendering="crispEdges"/><path d="M236 393L236 398L231 395.5Z" fill="#1818b8"/><polyline points="255,403 355,403" fill="none" stroke="#008000" stroke-width="1" shape-rendering="crispEdges"/><line x1="265.5" y1="403" x2="265.5" y2="425" stroke="#1818b8" stroke-width="1" shape-rendering="crispEdges"/><line x1="257" y1="425.5" x2="274" y2="425.5" stroke="#1818b8" stroke-width="1" shape-rendering="crispEdges"/><line x1="257" y1="429.5" x2="274" y2="429.5" stroke="#1818b8" stroke-width="1" shape-rendering="crispEdges"/><line x1="265.5" y1="429" x2="265.5" y2="462" stroke="#1818b8" stroke-width="1" shape-rendering="crispEdges"/><line x1="257" y1="462.5" x2="274" y2="462.5" stroke="#1818b8" stroke-width="1" shape-rendering="crispEdges"/><line x1="261" y1="468.5" x2="270" y2="468.5" stroke="#1818b8" stroke-width="1" shape-rendering="crispEdges"/><line x1="253.5" y1="420" x2="253.5" y2="434" stroke="#1818b8" stroke-width="1" shape-rendering="crispEdges"/><path d="M251 433L256 433L253.5 438Z" fill="#1818b8"/><line x1="313.5" y1="403" x2="313.5" y2="415" stroke="#1818b8" stroke-width="1" shape-rendering="crispEdges"/><rect x="310.0" y="415.5" width="7" height="23" fill="none" stroke="#1818b8" stroke-width="1" shape-rendering="crispEdges"/><line x1="313.5" y1="439" x2="313.5" y2="462" stroke="#1818b8" stroke-width="1" shape-rendering="crispEdges"/><line x1="305" y1="462.5" x2="322" y2="462.5" stroke="#1818b8" stroke-width="1" shape-rendering="crispEdges"/><line x1="309" y1="468.5" x2="318" y2="468.5" stroke="#1818b8" stroke-width="1" shape-rendering="crispEdges"/><line x1="321.5" y1="418" x2="321.5" y2="431" stroke="#1818b8" stroke-width="1" shape-rendering="crispEdges"/><path d="M319 430L324 430L321.5 435Z" fill="#1818b8"/><polyline points="369,212 369,271" fill="none" stroke="#008000" stroke-width="1" shape-rendering="crispEdges"/><rect x="365.5" y="291.5" width="8" height="4" fill="none" stroke="#1818b8" stroke-width="1" shape-rendering="crispEdges"/><line x1="369.5" y1="295" x2="369.5" y2="307" stroke="#1818b8" stroke-width="1" shape-rendering="crispEdges"/><polyline points="369,307 759,307" fill="none" stroke="#008000" stroke-width="1" shape-rendering="crispEdges"/><polyline points="369,307 369,371" fill="none" stroke="#008000" stroke-width="1" shape-rendering="crispEdges"/><polyline points="369.5,371 369.5,387.5 360.5,387.5" fill="none" stroke="#1818b8"/><rect x="359" y="385" width="2" height="21" fill="#1818b8"/><polyline points="360.5,403.5 369.5,403.5 369.5,419" fill="none" stroke="#1818b8"/><path d="M352 399L358 403.5L352 408Z" fill="#1818b8"/><polyline points="369,419 569,419" fill="none" stroke="#008000" stroke-width="1" shape-rendering="crispEdges"/><polyline points="569,268 569,371" fill="none" stroke="#008000" stroke-width="1" shape-rendering="crispEdges"/><polyline points="569.5,371 569.5,387.5 578.5,387.5" fill="none" stroke="#1818b8"/><rect x="578" y="385" width="2" height="21" fill="#1818b8"/><polyline points="579.5,403.5 569.5,403.5 569.5,419" fill="none" stroke="#1818b8"/><path d="M587 399L581 403.5L587 408Z" fill="#1818b8"/><polyline points="587,403 909,403" fill="none" stroke="#008000" stroke-width="1" shape-rendering="crispEdges"/><polyline points="557.5,155 557.5,171" fill="none" stroke="#1818b8"/><line x1="551.5" y1="160" x2="551.5" y2="167" stroke="#1818b8" stroke-width="1" shape-rendering="crispEdges"/><polyline points="557.5,164.5 569.5,164.5 569.5,185" fill="none" stroke="#1818b8"/><line x1="561" y1="185.5" x2="578" y2="185.5" stroke="#1818b8" stroke-width="1" shape-rendering="crispEdges"/><line x1="561" y1="189.5" x2="578" y2="189.5" stroke="#1818b8" stroke-width="1" shape-rendering="crispEdges"/><line x1="569.5" y1="189" x2="569.5" y2="212" stroke="#1818b8" stroke-width="1" shape-rendering="crispEdges"/><line x1="557.5" y1="180" x2="557.5" y2="192" stroke="#1818b8" stroke-width="1" shape-rendering="crispEdges"/><path d="M555 191L560 191L557.5 196Z" fill="#1818b8"/><line x1="569.5" y1="212" x2="569.5" y2="223" stroke="#1818b8" stroke-width="1" shape-rendering="crispEdges"/><rect x="566.0" y="223.5" width="7" height="24" fill="none" stroke="#1818b8" stroke-width="1" shape-rendering="crispEdges"/><line x1="569.5" y1="248" x2="569.5" y2="249" stroke="#1818b8" stroke-width="1" shape-rendering="crispEdges"/><line x1="577.5" y1="228" x2="577.5" y2="240" stroke="#1818b8" stroke-width="1" shape-rendering="crispEdges"/><path d="M575 239L580 239L577.5 244Z" fill="#1818b8"/><polyline points="457,419 457,475" fill="none" stroke="#008000" stroke-width="1" shape-rendering="crispEdges"/><line x1="449.5" y1="477" x2="449.5" y2="482" stroke="#1818b8" stroke-width="1" shape-rendering="crispEdges"/><path d="M447 480L452 480L449.5 485Z" fill="#1818b8"/><rect x="466" y="495" width="3" height="16" fill="#1818b8"/><line x1="467" y1="499.5" x2="581" y2="499.5" stroke="#1818b8" stroke-width="1" shape-rendering="crispEdges"/><rect x="533.5" y="495.5" width="24" height="8" fill="none" stroke="#1818b8" stroke-width="1" shape-rendering="crispEdges"/><line x1="581.5" y1="491" x2="581.5" y2="507" stroke="#1818b8" stroke-width="1" shape-rendering="crispEdges"/><line x1="587.5" y1="496" x2="587.5" y2="503" stroke="#1818b8" stroke-width="1" shape-rendering="crispEdges"/><path d="M466 504L457.5 512" stroke="#1818b8"/><path d="M457 513l1-6l5 4z" fill="#1818b8"/><line x1="544" y1="507.5" x2="561" y2="507.5" stroke="#1818b8" stroke-width="1" shape-rendering="crispEdges"/><path d="M513 518h17l-8.5 10z" fill="#1818b8"/><rect x="513" y="527" width="17" height="3" fill="#1818b8"/><line x1="537.5" y1="521" x2="537.5" y2="533" stroke="#1818b8" stroke-width="1" shape-rendering="crispEdges"/><path d="M535 532L540 532L537.5 537Z" fill="#1818b8"/><line x1="457.5" y1="512" x2="457.5" y2="560" stroke="#1818b8" stroke-width="1" shape-rendering="crispEdges"/><line x1="449.5" y1="517" x2="449.5" y2="522" stroke="#1818b8" stroke-width="1" shape-rendering="crispEdges"/><path d="M447 520L452 520L449.5 525Z" fill="#1818b8"/><rect x="454.0" y="560.5" width="7" height="23" fill="none" stroke="#1818b8" stroke-width="1" shape-rendering="crispEdges"/><line x1="449.5" y1="563" x2="449.5" y2="577" stroke="#1818b8" stroke-width="1" shape-rendering="crispEdges"/><path d="M447 576L452 576L449.5 581Z" fill="#1818b8"/><line x1="457.5" y1="584" x2="457.5" y2="596" stroke="#1818b8" stroke-width="1" shape-rendering="crispEdges"/><polyline points="457,596 457,643 1057,643" fill="none" stroke="#008000" stroke-width="1" shape-rendering="crispEdges"/><line x1="521.5" y1="528" x2="521.5" y2="596" stroke="#1818b8" stroke-width="1" shape-rendering="crispEdges"/><path d="M521.5 567L530 567L521.5 576Z" fill="#1818b8"/><rect x="521" y="575" width="9" height="3" fill="#1818b8"/><polyline points="521,596 521,643" fill="none" stroke="#008000" stroke-width="1" shape-rendering="crispEdges"/><line x1="657.5" y1="403" x2="657.5" y2="416" stroke="#1818b8" stroke-width="1" shape-rendering="crispEdges"/><rect x="653.5" y="434.5" width="8" height="5" fill="none" stroke="#1818b8" stroke-width="1" shape-rendering="crispEdges"/><line x1="657.5" y1="440" x2="657.5" y2="511" stroke="#1818b8" stroke-width="1" shape-rendering="crispEdges"/><line x1="649" y1="511.5" x2="666" y2="511.5" stroke="#1818b8" stroke-width="1" shape-rendering="crispEdges"/><line x1="653" y1="517.5" x2="662" y2="517.5" stroke="#1818b8" stroke-width="1" shape-rendering="crispEdges"/><polyline points="713,403 713,595 1009,595 1009,755 1157,755" fill="none" stroke="#008000" stroke-width="1" shape-rendering="crispEdges"/><polyline points="769,212 769,283" fill="none" stroke="#008000" stroke-width="1" shape-rendering="crispEdges"/><line x1="769.5" y1="283" x2="769.5" y2="291" stroke="#1818b8" stroke-width="1" shape-rendering="crispEdges"/><rect x="758" y="295" width="3" height="13" fill="#1818b8"/><path d="M760 300L769.5 291M760 304L769 312" stroke="#1818b8"/><line x1="745" y1="299.5" x2="754" y2="299.5" stroke="#1818b8" stroke-width="1" shape-rendering="crispEdges"/><path d="M753 297L753 302L758 299.5Z" fill="#1818b8"/><path d="M772 327h8l-4 5z" fill="#1818b8"/><polyline points="785,331 873,331" fill="none" stroke="#008000" stroke-width="1" shape-rendering="crispEdges"/><polyline points="785,351 785,503" fill="none" stroke="#008000" stroke-width="1" shape-rendering="crispEdges"/><polyline points="569,355 897,355 897,307" fill="none" stroke="#008000" stroke-width="1" shape-rendering="crispEdges"/><rect x="781.5" y="523.5" width="8" height="5" fill="none" stroke="#1818b8" stroke-width="1" shape-rendering="crispEdges"/><line x1="785.5" y1="528" x2="785.5" y2="551" stroke="#1818b8" stroke-width="1" shape-rendering="crispEdges"/><line x1="777" y1="551.5" x2="794" y2="551.5" stroke="#1818b8" stroke-width="1" shape-rendering="crispEdges"/><line x1="781" y1="557.5" x2="790" y2="557.5" stroke="#1818b8" stroke-width="1" shape-rendering="crispEdges"/><rect x="870.0" y="234.5" width="7" height="13" fill="none" stroke="#1818b8" stroke-width="1" shape-rendering="crispEdges"/><line x1="881.5" y1="238" x2="881.5" y2="243" stroke="#1818b8" stroke-width="1" shape-rendering="crispEdges"/><path d="M879 241L884 241L881.5 246Z" fill="#1818b8"/><polyline points="873,248 873,283 1095,283" fill="none" stroke="#008000" stroke-width="1" shape-rendering="crispEdges"/><rect x="882" y="303" width="3" height="17" fill="#1818b8"/><path d="M882 310L873.5 319" stroke="#1818b8"/><path d="M873 320l1-6l5 4z" fill="#1818b8"/><line x1="873.5" y1="319" x2="873.5" y2="331" stroke="#1818b8" stroke-width="1" shape-rendering="crispEdges"/><line x1="884" y1="307.5" x2="897" y2="307.5" stroke="#1818b8" stroke-width="1" shape-rendering="crispEdges"/><line x1="865.5" y1="287" x2="865.5" y2="292" stroke="#1818b8" stroke-width="1" shape-rendering="crispEdges"/><path d="M863 290L868 290L865.5 295Z" fill="#1818b8"/><line x1="865.5" y1="326" x2="865.5" y2="331" stroke="#1818b8" stroke-width="1" shape-rendering="crispEdges"/><path d="M863 329L868 329L865.5 334Z" fill="#1818b8"/><rect x="909.5" y="399.5" width="24" height="7" fill="none" stroke="#1818b8" stroke-width="1" shape-rendering="crispEdges"/><line x1="913" y1="411.5" x2="927" y2="411.5" stroke="#1818b8" stroke-width="1" shape-rendering="crispEdges"/><path d="M926 409L926 414L931 411.5Z" fill="#1818b8"/><polyline points="934,403 1037,403" fill="none" stroke="#008000" stroke-width="1" shape-rendering="crispEdges"/><polyline points="841,403 841,451 861,451" fill="none" stroke="#008000" stroke-width="1" shape-rendering="crispEdges"/><rect x="861.5" y="447.5" width="24" height="7" fill="none" stroke="#1818b8" stroke-width="1" shape-rendering="crispEdges"/><line x1="886" y1="451.5" x2="919" y2="451.5" stroke="#1818b8" stroke-width="1" shape-rendering="crispEdges"/><line x1="919.5" y1="443" x2="919.5" y2="460" stroke="#1818b8" stroke-width="1" shape-rendering="crispEdges"/><line x1="923.5" y1="443" x2="923.5" y2="460" stroke="#1818b8" stroke-width="1" shape-rendering="crispEdges"/><polyline points="924,451 985,451" fill="none" stroke="#008000" stroke-width="1" shape-rendering="crispEdges"/><line x1="913" y1="463.5" x2="927" y2="463.5" stroke="#1818b8" stroke-width="1" shape-rendering="crispEdges"/><path d="M926 461L926 466L931 463.5Z" fill="#1818b8"/><polyline points="985,403 985,451" fill="none" stroke="#008000" stroke-width="1" shape-rendering="crispEdges"/><line x1="985.5" y1="451" x2="985.5" y2="463" stroke="#1818b8" stroke-width="1" shape-rendering="crispEdges"/><rect x="982.0" y="463.5" width="7" height="24" fill="none" stroke="#1818b8" stroke-width="1" shape-rendering="crispEdges"/><line x1="993.5" y1="473" x2="993.5" y2="486" stroke="#1818b8" stroke-width="1" shape-rendering="crispEdges"/><path d="M991 474L996 474L993.5 469Z" fill="#1818b8"/><line x1="985.5" y1="488" x2="985.5" y2="522" stroke="#1818b8" stroke-width="1" shape-rendering="crispEdges"/><line x1="977" y1="522.5" x2="994" y2="522.5" stroke="#1818b8" stroke-width="1" shape-rendering="crispEdges"/><line x1="977" y1="526.5" x2="994" y2="526.5" stroke="#1818b8" stroke-width="1" shape-rendering="crispEdges"/><line x1="985.5" y1="526" x2="985.5" y2="559" stroke="#1818b8" stroke-width="1" shape-rendering="crispEdges"/><line x1="977" y1="559.5" x2="994" y2="559.5" stroke="#1818b8" stroke-width="1" shape-rendering="crispEdges"/><line x1="981" y1="565.5" x2="990" y2="565.5" stroke="#1818b8" stroke-width="1" shape-rendering="crispEdges"/><rect x="1037.5" y="399.5" width="24" height="7" fill="none" stroke="#1818b8" stroke-width="1" shape-rendering="crispEdges"/><line x1="1041" y1="411.5" x2="1055" y2="411.5" stroke="#1818b8" stroke-width="1" shape-rendering="crispEdges"/><path d="M1054 409L1054 414L1059 411.5Z" fill="#1818b8"/><polyline points="1062,403 1185,403 1185,371" fill="none" stroke="#008000" stroke-width="1" shape-rendering="crispEdges"/><polyline points="1073,403 1073,451 1052,451" fill="none" stroke="#008000" stroke-width="1" shape-rendering="crispEdges"/><line x1="1048.0" y1="443" x2="1048.0" y2="460" stroke="#1818b8" stroke-width="1" shape-rendering="crispEdges"/><line x1="1052.0" y1="443" x2="1052.0" y2="460" stroke="#1818b8" stroke-width="1" shape-rendering="crispEdges"/><polyline points="1047,451 985,451" fill="none" stroke="#008000" stroke-width="1" shape-rendering="crispEdges"/><line x1="1044" y1="463.5" x2="1055" y2="463.5" stroke="#1818b8" stroke-width="1" shape-rendering="crispEdges"/><path d="M1054 461L1054 466L1059 463.5Z" fill="#1818b8"/><polyline points="1105,212 1209,212 1209,189" fill="none" stroke="#008000" stroke-width="1" shape-rendering="crispEdges"/><line x1="1201" y1="189.5" x2="1218" y2="189.5" stroke="#1818b8" stroke-width="1" shape-rendering="crispEdges"/><line x1="1203" y1="185.5" x2="1214" y2="185.5" stroke="#1818b8" stroke-width="1" shape-rendering="crispEdges"/><line x1="1209.5" y1="151" x2="1209.5" y2="185" stroke="#1818b8" stroke-width="1" shape-rendering="crispEdges"/><line x1="1201" y1="151.5" x2="1218" y2="151.5" stroke="#1818b8" stroke-width="1" shape-rendering="crispEdges"/><line x1="1205" y1="145.5" x2="1214" y2="145.5" stroke="#1818b8" stroke-width="1" shape-rendering="crispEdges"/><line x1="1217.5" y1="180" x2="1217.5" y2="192" stroke="#1818b8" stroke-width="1" shape-rendering="crispEdges"/><path d="M1215 191L1220 191L1217.5 196Z" fill="#1818b8"/><line x1="1105.5" y1="212" x2="1105.5" y2="223" stroke="#1818b8" stroke-width="1" shape-rendering="crispEdges"/><rect x="1102.0" y="223.5" width="7" height="24" fill="none" stroke="#1818b8" stroke-width="1" shape-rendering="crispEdges"/><line x1="1113.5" y1="228" x2="1113.5" y2="240" stroke="#1818b8" stroke-width="1" shape-rendering="crispEdges"/><path d="M1111 239L1116 239L1113.5 244Z" fill="#1818b8"/><line x1="1105.5" y1="248" x2="1105.5" y2="265" stroke="#1818b8" stroke-width="1" shape-rendering="crispEdges"/><rect x="1094" y="271" width="3" height="12" fill="#1818b8"/><path d="M1097 275L1105 266" stroke="#1818b8"/><path d="M1098 275l6-2l-3 -4z" fill="#1818b8"/><line x1="1083" y1="275.5" x2="1090" y2="275.5" stroke="#1818b8" stroke-width="1" shape-rendering="crispEdges"/><path d="M1084 273L1084 278L1079 275.5Z" fill="#1818b8"/><line x1="1041.5" y1="283" x2="1041.5" y2="305" stroke="#1818b8" stroke-width="1" shape-rendering="crispEdges"/><line x1="1033" y1="305.5" x2="1050" y2="305.5" stroke="#1818b8" stroke-width="1" shape-rendering="crispEdges"/><line x1="1033" y1="309.5" x2="1050" y2="309.5" stroke="#1818b8" stroke-width="1" shape-rendering="crispEdges"/><line x1="1041.5" y1="309" x2="1041.5" y2="331.5" stroke="#1818b8" stroke-width="1" shape-rendering="crispEdges"/><line x1="1041" y1="331.5" x2="1053" y2="331.5" stroke="#1818b8" stroke-width="1" shape-rendering="crispEdges"/><rect x="1053.5" y="327.5" width="24" height="7" fill="none" stroke="#1818b8" stroke-width="1" shape-rendering="crispEdges"/><polyline points="1077,331 1105,331" fill="none" stroke="#008000" stroke-width="1" shape-rendering="crispEdges"/><line x1="1029.5" y1="300" x2="1029.5" y2="312" stroke="#1818b8" stroke-width="1" shape-rendering="crispEdges"/><path d="M1027 311L1032 311L1029.5 316Z" fill="#1818b8"/><line x1="1105.5" y1="283" x2="1105.5" y2="307" stroke="#1818b8" stroke-width="1" shape-rendering="crispEdges"/><line x1="1113.5" y1="303" x2="1113.5" y2="308" stroke="#1818b8" stroke-width="1" shape-rendering="crispEdges"/><path d="M1111 306L1116 306L1113.5 311Z" fill="#1818b8"/><polyline points="1105,331 1105,444" fill="none" stroke="#008000" stroke-width="1" shape-rendering="crispEdges"/><line x1="1105" y1="371.5" x2="1160" y2="371.5" stroke="#1818b8" stroke-width="1" shape-rendering="crispEdges"/><path d="M1116 367L1122 371.5L1116 376Z" fill="#1818b8"/><path d="M1135 367L1141 371.5L1135 376Z" fill="#1818b8"/><path d="M1123 365L1137 378M1137 365L1123 378" stroke="#1818b8"/><polyline points="1160,371 1357,371" fill="none" stroke="#008000" stroke-width="1" shape-rendering="crispEdges"/><rect x="1357.5" y="367.5" width="24" height="7" fill="none" stroke="#1818b8" stroke-width="1" shape-rendering="crispEdges"/><line x1="1363" y1="379.5" x2="1378" y2="379.5" stroke="#1818b8" stroke-width="1" shape-rendering="crispEdges"/><path d="M1364 377L1364 382L1359 379.5Z" fill="#1818b8"/><line x1="1382" y1="371.5" x2="1409" y2="371.5" stroke="#1818b8" stroke-width="1" shape-rendering="crispEdges"/><polyline points="1409,371 1561,371" fill="none" stroke="#008000" stroke-width="1" shape-rendering="crispEdges"/><line x1="1097.5" y1="446" x2="1097.5" y2="451" stroke="#1818b8" stroke-width="1" shape-rendering="crispEdges"/><path d="M1095 449L1100 449L1097.5 454Z" fill="#1818b8"/><line x1="1105.5" y1="463" x2="1105.5" y2="492" stroke="#1818b8" stroke-width="1" shape-rendering="crispEdges"/><rect x="1114" y="463" width="3" height="17" fill="#1818b8"/><polyline points="1116,467 1249,467" fill="none" stroke="#008000" stroke-width="1" shape-rendering="crispEdges"/><path d="M1114 472L1105.5 481" stroke="#1818b8"/><path d="M1105 482l1-6l5 4z" fill="#1818b8"/><line x1="1097.5" y1="486" x2="1097.5" y2="491" stroke="#1818b8" stroke-width="1" shape-rendering="crispEdges"/><path d="M1095 489L1100 489L1097.5 494Z" fill="#1818b8"/><rect x="1102.0" y="503.5" width="7" height="24" fill="none" stroke="#1818b8" stroke-width="1" shape-rendering="crispEdges"/><line x1="1113.5" y1="507" x2="1113.5" y2="519" stroke="#1818b8" stroke-width="1" shape-rendering="crispEdges"/><path d="M1111 518L1116 518L1113.5 523Z" fill="#1818b8"/><polyline points="1105,528 1105,563" fill="none" stroke="#008000" stroke-width="1" shape-rendering="crispEdges"/><line x1="1245" y1="401.5" x2="1254" y2="401.5" stroke="#1818b8" stroke-width="1" shape-rendering="crispEdges"/><line x1="1241" y1="407.5" x2="1258" y2="407.5" stroke="#1818b8" stroke-width="1" shape-rendering="crispEdges"/><line x1="1249.5" y1="407" x2="1249.5" y2="432" stroke="#1818b8" stroke-width="1" shape-rendering="crispEdges"/><rect x="1246.0" y="432.5" width="7" height="23" fill="none" stroke="#1818b8" stroke-width="1" shape-rendering="crispEdges"/><line x1="1249.5" y1="456" x2="1249.5" y2="487" stroke="#1818b8" stroke-width="1" shape-rendering="crispEdges"/><line x1="1241.5" y1="438" x2="1241.5" y2="449" stroke="#1818b8" stroke-width="1" shape-rendering="crispEdges"/><path d="M1239 448L1244 448L1241.5 453Z" fill="#1818b8"/><path d="M1240 487h18l-9 9z" fill="#1818b8"/><rect x="1240" y="495" width="18" height="3" fill="#1818b8"/><line x1="1265.5" y1="486" x2="1265.5" y2="500" stroke="#1818b8" stroke-width="1" shape-rendering="crispEdges"/><path d="M1263 499L1268 499L1265.5 504Z" fill="#1818b8"/><line x1="1249.5" y1="498" x2="1249.5" y2="527" stroke="#1818b8" stroke-width="1" shape-rendering="crispEdges"/><rect x="1246.0" y="527.5" width="7" height="23" fill="none" stroke="#1818b8" stroke-width="1" shape-rendering="crispEdges"/><polyline points="1249,551 1249,563 1057,563 1057,643" fill="none" stroke="#008000" stroke-width="1" shape-rendering="crispEdges"/><line x1="1217.5" y1="563" x2="1217.5" y2="585" stroke="#1818b8" stroke-width="1" shape-rendering="crispEdges"/><line x1="1211" y1="585.5" x2="1223" y2="585.5" stroke="#1818b8" stroke-width="1" shape-rendering="crispEdges"/><line x1="1209" y1="589.5" x2="1226" y2="589.5" stroke="#1818b8" stroke-width="1" shape-rendering="crispEdges"/><line x1="1217.5" y1="589" x2="1217.5" y2="623" stroke="#1818b8" stroke-width="1" shape-rendering="crispEdges"/><line x1="1209" y1="623.5" x2="1226" y2="623.5" stroke="#1818b8" stroke-width="1" shape-rendering="crispEdges"/><line x1="1213" y1="629.5" x2="1222" y2="629.5" stroke="#1818b8" stroke-width="1" shape-rendering="crispEdges"/><line x1="1225.5" y1="580" x2="1225.5" y2="592" stroke="#1818b8" stroke-width="1" shape-rendering="crispEdges"/><path d="M1223 591L1228 591L1225.5 596Z" fill="#1818b8"/><line x1="1057.5" y1="643" x2="1057.5" y2="666" stroke="#1818b8" stroke-width="1" shape-rendering="crispEdges"/><line x1="1049" y1="665.5" x2="1066" y2="665.5" stroke="#1818b8" stroke-width="1" shape-rendering="crispEdges"/><line x1="1049" y1="669.5" x2="1066" y2="669.5" stroke="#1818b8" stroke-width="1" shape-rendering="crispEdges"/><line x1="1057.5" y1="669" x2="1057.5" y2="703" stroke="#1818b8" stroke-width="1" shape-rendering="crispEdges"/><line x1="1049" y1="703.5" x2="1066" y2="703.5" stroke="#1818b8" stroke-width="1" shape-rendering="crispEdges"/><line x1="1053" y1="709.5" x2="1062" y2="709.5" stroke="#1818b8" stroke-width="1" shape-rendering="crispEdges"/><line x1="1045.5" y1="660" x2="1045.5" y2="672" stroke="#1818b8" stroke-width="1" shape-rendering="crispEdges"/><path d="M1043 671L1048 671L1045.5 676Z" fill="#1818b8"/><rect x="1157.5" y="751.5" width="24" height="7" fill="none" stroke="#1818b8" stroke-width="1" shape-rendering="crispEdges"/><line x1="1163" y1="747.5" x2="1178" y2="747.5" stroke="#1818b8" stroke-width="1" shape-rendering="crispEdges"/><path d="M1164 745L1164 750L1159 747.5Z" fill="#1818b8"/><line x1="1182" y1="755.5" x2="1209" y2="755.5" stroke="#1818b8" stroke-width="1" shape-rendering="crispEdges"/><polyline points="1209,755 1264,755" fill="none" stroke="#008000" stroke-width="1" shape-rendering="crispEdges"/><line x1="1264" y1="755.5" x2="1290" y2="755.5" stroke="#1818b8" stroke-width="1" shape-rendering="crispEdges"/><polyline points="1209,720 1209,635 1345,635 1345,731" fill="none" stroke="#008000" stroke-width="1" shape-rendering="crispEdges"/><line x1="1209.5" y1="720" x2="1209.5" y2="729" stroke="#1818b8" stroke-width="1" shape-rendering="crispEdges"/><line x1="1201" y1="729.5" x2="1218" y2="729.5" stroke="#1818b8" stroke-width="1" shape-rendering="crispEdges"/><line x1="1201" y1="733.5" x2="1218" y2="733.5" stroke="#1818b8" stroke-width="1" shape-rendering="crispEdges"/><line x1="1209.5" y1="733" x2="1209.5" y2="755" stroke="#1818b8" stroke-width="1" shape-rendering="crispEdges"/><line x1="1197.5" y1="727" x2="1197.5" y2="740" stroke="#1818b8" stroke-width="1" shape-rendering="crispEdges"/><path d="M1195 728L1200 728L1197.5 723Z" fill="#1818b8"/><path d="M1290 755.5L1331.5 728V783Z" fill="none" stroke="#1818b8"/><line x1="1331" y1="731.5" x2="1345" y2="731.5" stroke="#1818b8" stroke-width="1" shape-rendering="crispEdges"/><line x1="1345" y1="731.5" x2="1357" y2="731.5" stroke="#1818b8" stroke-width="1" shape-rendering="crispEdges"/><rect x="1357.5" y="727.5" width="24" height="7" fill="none" stroke="#1818b8" stroke-width="1" shape-rendering="crispEdges"/><line x1="1362" y1="723.5" x2="1375" y2="723.5" stroke="#1818b8" stroke-width="1" shape-rendering="crispEdges"/><path d="M1374 721L1374 726L1379 723.5Z" fill="#1818b8"/><polyline points="1382,731.5 1393.5,731.5 1393.5,743" fill="none" stroke="#1818b8"/><line x1="1385" y1="743.5" x2="1402" y2="743.5" stroke="#1818b8" stroke-width="1" shape-rendering="crispEdges"/><line x1="1389" y1="749.5" x2="1398" y2="749.5" stroke="#1818b8" stroke-width="1" shape-rendering="crispEdges"/><polyline points="1331,779 1409,779" fill="none" stroke="#008000" stroke-width="1" shape-rendering="crispEdges"/><line x1="1301" y1="658.5" x2="1310" y2="658.5" stroke="#1818b8" stroke-width="1" shape-rendering="crispEdges"/><line x1="1297" y1="663.5" x2="1314" y2="663.5" stroke="#1818b8" stroke-width="1" shape-rendering="crispEdges"/><line x1="1305.5" y1="663" x2="1305.5" y2="697" stroke="#1818b8" stroke-width="1" shape-rendering="crispEdges"/><line x1="1297" y1="697.5" x2="1314" y2="697.5" stroke="#1818b8" stroke-width="1" shape-rendering="crispEdges"/><line x1="1301" y1="701.5" x2="1310" y2="701.5" stroke="#1818b8" stroke-width="1" shape-rendering="crispEdges"/><line x1="1305.5" y1="701" x2="1305.5" y2="741" stroke="#1818b8" stroke-width="1" shape-rendering="crispEdges"/><line x1="1297.5" y1="695" x2="1297.5" y2="708" stroke="#1818b8" stroke-width="1" shape-rendering="crispEdges"/><path d="M1295 696L1300 696L1297.5 691Z" fill="#1818b8"/><line x1="1305.5" y1="769" x2="1305.5" y2="809" stroke="#1818b8" stroke-width="1" shape-rendering="crispEdges"/><line x1="1297" y1="809.5" x2="1314" y2="809.5" stroke="#1818b8" stroke-width="1" shape-rendering="crispEdges"/><line x1="1301" y1="813.5" x2="1310" y2="813.5" stroke="#1818b8" stroke-width="1" shape-rendering="crispEdges"/><line x1="1305.5" y1="813" x2="1305.5" y2="847" stroke="#1818b8" stroke-width="1" shape-rendering="crispEdges"/><line x1="1297" y1="847.5" x2="1314" y2="847.5" stroke="#1818b8" stroke-width="1" shape-rendering="crispEdges"/><line x1="1301" y1="853.5" x2="1310" y2="853.5" stroke="#1818b8" stroke-width="1" shape-rendering="crispEdges"/><line x1="1297.5" y1="808" x2="1297.5" y2="820" stroke="#1818b8" stroke-width="1" shape-rendering="crispEdges"/><path d="M1295 809L1300 809L1297.5 804Z" fill="#1818b8"/><text x="1310" y="731" font-family='"Liberation Sans", sans-serif' font-size="9" fill="#1818b8" font-weight="normal" font-style="normal" text-anchor="start">–</text><text x="1321" y="747" font-family='"Liberation Sans", sans-serif' font-size="9" fill="#1818b8" font-weight="normal" font-style="normal" text-anchor="start">–</text><text x="1321" y="771" font-family='"Liberation Sans", sans-serif' font-size="10" fill="#1818b8" font-weight="normal" font-style="normal" text-anchor="start">+</text><text x="1308" y="787" font-family='"Liberation Sans", sans-serif' font-size="10" fill="#1818b8" font-weight="normal" font-style="normal" text-anchor="start">+</text><polyline points="1409,371 1409,701" fill="none" stroke="#008000" stroke-width="1" shape-rendering="crispEdges"/><line x1="1409.5" y1="720" x2="1409.5" y2="743" stroke="#1818b8" stroke-width="1" shape-rendering="crispEdges"/><rect x="1406.0" y="743.5" width="7" height="23" fill="none" stroke="#1818b8" stroke-width="1" shape-rendering="crispEdges"/><line x1="1409.5" y1="767" x2="1409.5" y2="801" stroke="#1818b8" stroke-width="1" shape-rendering="crispEdges"/><line x1="1418.5" y1="750" x2="1418.5" y2="763" stroke="#1818b8" stroke-width="1" shape-rendering="crispEdges"/><path d="M1416 751L1421 751L1418.5 746Z" fill="#1818b8"/><line x1="1401" y1="801.5" x2="1418" y2="801.5" stroke="#1818b8" stroke-width="1" shape-rendering="crispEdges"/><line x1="1401" y1="805.5" x2="1418" y2="805.5" stroke="#1818b8" stroke-width="1" shape-rendering="crispEdges"/><line x1="1409.5" y1="805" x2="1409.5" y2="839" stroke="#1818b8" stroke-width="1" shape-rendering="crispEdges"/><line x1="1401" y1="839.5" x2="1418" y2="839.5" stroke="#1818b8" stroke-width="1" shape-rendering="crispEdges"/><line x1="1405" y1="845.5" x2="1414" y2="845.5" stroke="#1818b8" stroke-width="1" shape-rendering="crispEdges"/><line x1="1422.5" y1="798" x2="1422.5" y2="812" stroke="#1818b8" stroke-width="1" shape-rendering="crispEdges"/><path d="M1420 799L1425 799L1422.5 794Z" fill="#1818b8"/><line x1="1521.5" y1="371" x2="1521.5" y2="359" stroke="#1818b8" stroke-width="1" shape-rendering="crispEdges"/><rect x="1518.0" y="335.5" width="7" height="24" fill="none" stroke="#1818b8" stroke-width="1" shape-rendering="crispEdges"/><polyline points="1521.5,335 1521.5,323.5 1534,323.5" fill="none" stroke="#1818b8"/><line x1="1534.5" y1="316" x2="1534.5" y2="331" stroke="#1818b8" stroke-width="1" shape-rendering="crispEdges"/><line x1="1539.5" y1="320" x2="1539.5" y2="327" stroke="#1818b8" stroke-width="1" shape-rendering="crispEdges"/><line x1="1529.5" y1="338" x2="1529.5" y2="349" stroke="#1818b8" stroke-width="1" shape-rendering="crispEdges"/><path d="M1527 348L1532 348L1529.5 353Z" fill="#1818b8"/><text x="1553" y="367" font-family='"Liberation Sans", sans-serif' font-size="14" fill="#e02020" font-weight="normal" font-style="normal" text-anchor="start" textLength="13" lengthAdjust="spacingAndGlyphs">in</text><path d="M1561 367L1567 371.5L1561 376Z" fill="#1818b8"/><line x1="1566" y1="371.5" x2="1569" y2="371.5" stroke="#1818b8" stroke-width="1" shape-rendering="crispEdges"/><rect x="1569.5" y="347.5" width="88" height="48" fill="none" stroke="#1818b8" stroke-width="1.5"/><polyline points="1577,379.5 1624,363.5 1625.5,360 1630.5,355 1635.5,355 1639,358.5 1650,379.5" fill="none" stroke="#1818b8" stroke-width="1.2"/><text x="1576" y="391" font-family='"Liberation Sans", sans-serif' font-size="10" fill="#1818b8" font-weight="normal" font-style="normal" text-anchor="start" textLength="77" lengthAdjust="spacingAndGlyphs">ITU-R Weighting</text><path d="M1658 367L1664 371.5L1658 376Z" fill="#1818b8"/><text x="1665" y="367" font-family='"Liberation Sans", sans-serif' font-size="14" fill="#e02020" font-weight="normal" font-style="normal" text-anchor="start" textLength="20" lengthAdjust="spacingAndGlyphs">out</text><polyline points="1665,371 1785,371" fill="none" stroke="#008000" stroke-width="1" shape-rendering="crispEdges"/><line x1="1697.5" y1="371" x2="1697.5" y2="383" stroke="#1818b8" stroke-width="1" shape-rendering="crispEdges"/><rect x="1694.0" y="383.5" width="7" height="24" fill="none" stroke="#1818b8" stroke-width="1" shape-rendering="crispEdges"/><line x1="1697.5" y1="408" x2="1697.5" y2="432" stroke="#1818b8" stroke-width="1" shape-rendering="crispEdges"/><line x1="1689" y1="432.5" x2="1706" y2="432.5" stroke="#1818b8" stroke-width="1" shape-rendering="crispEdges"/><line x1="1693" y1="438.5" x2="1702" y2="438.5" stroke="#1818b8" stroke-width="1" shape-rendering="crispEdges"/><line x1="1689.5" y1="388" x2="1689.5" y2="401" stroke="#1818b8" stroke-width="1" shape-rendering="crispEdges"/><path d="M1687 400L1692 400L1689.5 405Z" fill="#1818b8"/><text x="1761" y="368" font-family='"Liberation Sans", sans-serif' font-size="13" fill="#1818b8" font-weight="normal" font-style="normal" text-anchor="start" textLength="141" lengthAdjust="spacingAndGlyphs">ITU-R-Weighted-OUT</text><text x="1714" y="271" font-family='"Liberation Sans", sans-serif' font-size="20" fill="#1818b8" font-weight="normal" font-style="normal" text-anchor="start" textLength="208" lengthAdjust="spacingAndGlyphs" stroke="#1818b8" stroke-width="0.25">Measurement device</text><polyline points="1441,371 1441,427 1457,427" fill="none" stroke="#008000" stroke-width="1" shape-rendering="crispEdges"/><path d="M1457.5 403.5L1497.5 427L1457.5 448Z" fill="none" stroke="#1818b8"/><line x1="1497" y1="427.5" x2="1513" y2="427.5" stroke="#1818b8" stroke-width="1" shape-rendering="crispEdges"/><polyline points="1513,427 1513,467 1441,467 1441,507 1453,507" fill="none" stroke="#008000" stroke-width="1" shape-rendering="crispEdges"/><rect x="1453.5" y="503.5" width="24" height="7" fill="none" stroke="#1818b8" stroke-width="1" shape-rendering="crispEdges"/><line x1="1457" y1="499.5" x2="1472" y2="499.5" stroke="#1818b8" stroke-width="1" shape-rendering="crispEdges"/><path d="M1471 497L1471 502L1476 499.5Z" fill="#1818b8"/><line x1="1478" y1="507.5" x2="1511" y2="507.5" stroke="#1818b8" stroke-width="1" shape-rendering="crispEdges"/><line x1="1515" y1="507.5" x2="1559" y2="507.5" stroke="#1818b8" stroke-width="1" shape-rendering="crispEdges"/><line x1="1563" y1="507.5" x2="1607" y2="507.5" stroke="#1818b8" stroke-width="1" shape-rendering="crispEdges"/><line x1="1611" y1="507.5" x2="1655" y2="507.5" stroke="#1818b8" stroke-width="1" shape-rendering="crispEdges"/><line x1="1659" y1="507.5" x2="1693" y2="507.5" stroke="#1818b8" stroke-width="1" shape-rendering="crispEdges"/><line x1="1511.5" y1="499" x2="1511.5" y2="516" stroke="#1818b8" stroke-width="1" shape-rendering="crispEdges"/><line x1="1515.5" y1="499" x2="1515.5" y2="516" stroke="#1818b8" stroke-width="1" shape-rendering="crispEdges"/><line x1="1508" y1="495.5" x2="1522" y2="495.5" stroke="#1818b8" stroke-width="1" shape-rendering="crispEdges"/><path d="M1509 493L1509 498L1504 495.5Z" fill="#1818b8"/><line x1="1559.5" y1="499" x2="1559.5" y2="516" stroke="#1818b8" stroke-width="1" shape-rendering="crispEdges"/><line x1="1563.5" y1="499" x2="1563.5" y2="516" stroke="#1818b8" stroke-width="1" shape-rendering="crispEdges"/><line x1="1556" y1="495.5" x2="1570" y2="495.5" stroke="#1818b8" stroke-width="1" shape-rendering="crispEdges"/><path d="M1557 493L1557 498L1552 495.5Z" fill="#1818b8"/><line x1="1607.5" y1="499" x2="1607.5" y2="516" stroke="#1818b8" stroke-width="1" shape-rendering="crispEdges"/><line x1="1611.5" y1="499" x2="1611.5" y2="516" stroke="#1818b8" stroke-width="1" shape-rendering="crispEdges"/><line x1="1604" y1="495.5" x2="1618" y2="495.5" stroke="#1818b8" stroke-width="1" shape-rendering="crispEdges"/><path d="M1605 493L1605 498L1600 495.5Z" fill="#1818b8"/><line x1="1655.5" y1="499" x2="1655.5" y2="516" stroke="#1818b8" stroke-width="1" shape-rendering="crispEdges"/><line x1="1659.5" y1="499" x2="1659.5" y2="516" stroke="#1818b8" stroke-width="1" shape-rendering="crispEdges"/><line x1="1652" y1="495.5" x2="1666" y2="495.5" stroke="#1818b8" stroke-width="1" shape-rendering="crispEdges"/><path d="M1653 493L1653 498L1648 495.5Z" fill="#1818b8"/><line x1="1489.5" y1="507" x2="1489.5" y2="529" stroke="#1818b8" stroke-width="1" shape-rendering="crispEdges"/><line x1="1481" y1="529.5" x2="1498" y2="529.5" stroke="#1818b8" stroke-width="1" shape-rendering="crispEdges"/><line x1="1481" y1="533.5" x2="1498" y2="533.5" stroke="#1818b8" stroke-width="1" shape-rendering="crispEdges"/><line x1="1489.5" y1="533" x2="1489.5" y2="567" stroke="#1818b8" stroke-width="1" shape-rendering="crispEdges"/><line x1="1481" y1="567.5" x2="1498" y2="567.5" stroke="#1818b8" stroke-width="1" shape-rendering="crispEdges"/><line x1="1485" y1="573.5" x2="1494" y2="573.5" stroke="#1818b8" stroke-width="1" shape-rendering="crispEdges"/><line x1="1501.5" y1="523" x2="1501.5" y2="537" stroke="#1818b8" stroke-width="1" shape-rendering="crispEdges"/><path d="M1499 536L1504 536L1501.5 541Z" fill="#1818b8"/><line x1="1537.5" y1="507" x2="1537.5" y2="519" stroke="#1818b8" stroke-width="1" shape-rendering="crispEdges"/><rect x="1534.0" y="519.5" width="7" height="24" fill="none" stroke="#1818b8" stroke-width="1" shape-rendering="crispEdges"/><line x1="1537.5" y1="544" x2="1537.5" y2="567" stroke="#1818b8" stroke-width="1" shape-rendering="crispEdges"/><line x1="1529" y1="567.5" x2="1546" y2="567.5" stroke="#1818b8" stroke-width="1" shape-rendering="crispEdges"/><line x1="1533" y1="573.5" x2="1542" y2="573.5" stroke="#1818b8" stroke-width="1" shape-rendering="crispEdges"/><line x1="1545.5" y1="523" x2="1545.5" y2="537" stroke="#1818b8" stroke-width="1" shape-rendering="crispEdges"/><path d="M1543 536L1548 536L1545.5 541Z" fill="#1818b8"/><line x1="1585.5" y1="507" x2="1585.5" y2="519" stroke="#1818b8" stroke-width="1" shape-rendering="crispEdges"/><rect x="1582.0" y="519.5" width="7" height="24" fill="none" stroke="#1818b8" stroke-width="1" shape-rendering="crispEdges"/><line x1="1585.5" y1="544" x2="1585.5" y2="567" stroke="#1818b8" stroke-width="1" shape-rendering="crispEdges"/><line x1="1577" y1="567.5" x2="1594" y2="567.5" stroke="#1818b8" stroke-width="1" shape-rendering="crispEdges"/><line x1="1581" y1="573.5" x2="1590" y2="573.5" stroke="#1818b8" stroke-width="1" shape-rendering="crispEdges"/><line x1="1593.5" y1="523" x2="1593.5" y2="537" stroke="#1818b8" stroke-width="1" shape-rendering="crispEdges"/><path d="M1591 536L1596 536L1593.5 541Z" fill="#1818b8"/><line x1="1633.5" y1="507" x2="1633.5" y2="519" stroke="#1818b8" stroke-width="1" shape-rendering="crispEdges"/><rect x="1630.0" y="519.5" width="7" height="24" fill="none" stroke="#1818b8" stroke-width="1" shape-rendering="crispEdges"/><line x1="1633.5" y1="544" x2="1633.5" y2="567" stroke="#1818b8" stroke-width="1" shape-rendering="crispEdges"/><line x1="1625" y1="567.5" x2="1642" y2="567.5" stroke="#1818b8" stroke-width="1" shape-rendering="crispEdges"/><line x1="1629" y1="573.5" x2="1638" y2="573.5" stroke="#1818b8" stroke-width="1" shape-rendering="crispEdges"/><line x1="1625.5" y1="523" x2="1625.5" y2="537" stroke="#1818b8" stroke-width="1" shape-rendering="crispEdges"/><path d="M1623 536L1628 536L1625.5 541Z" fill="#1818b8"/><rect x="1693.5" y="503.5" width="24" height="7" fill="none" stroke="#1818b8" stroke-width="1" shape-rendering="crispEdges"/><polyline points="1718,507 1777,507" fill="none" stroke="#008000" stroke-width="1" shape-rendering="crispEdges"/><line x1="1729.5" y1="507" x2="1729.5" y2="529" stroke="#1818b8" stroke-width="1" shape-rendering="crispEdges"/><line x1="1721" y1="529.5" x2="1738" y2="529.5" stroke="#1818b8" stroke-width="1" shape-rendering="crispEdges"/><line x1="1721" y1="533.5" x2="1738" y2="533.5" stroke="#1818b8" stroke-width="1" shape-rendering="crispEdges"/><line x1="1729.5" y1="533" x2="1729.5" y2="567" stroke="#1818b8" stroke-width="1" shape-rendering="crispEdges"/><line x1="1721" y1="567.5" x2="1738" y2="567.5" stroke="#1818b8" stroke-width="1" shape-rendering="crispEdges"/><line x1="1725" y1="573.5" x2="1734" y2="573.5" stroke="#1818b8" stroke-width="1" shape-rendering="crispEdges"/><line x1="1717.5" y1="523" x2="1717.5" y2="537" stroke="#1818b8" stroke-width="1" shape-rendering="crispEdges"/><path d="M1715 536L1720 536L1717.5 541Z" fill="#1818b8"/><line x1="1761.5" y1="507" x2="1761.5" y2="519" stroke="#1818b8" stroke-width="1" shape-rendering="crispEdges"/><rect x="1758.0" y="519.5" width="7" height="24" fill="none" stroke="#1818b8" stroke-width="1" shape-rendering="crispEdges"/><line x1="1761.5" y1="544" x2="1761.5" y2="567" stroke="#1818b8" stroke-width="1" shape-rendering="crispEdges"/><line x1="1753" y1="567.5" x2="1770" y2="567.5" stroke="#1818b8" stroke-width="1" shape-rendering="crispEdges"/><line x1="1757" y1="573.5" x2="1766" y2="573.5" stroke="#1818b8" stroke-width="1" shape-rendering="crispEdges"/><line x1="1753.5" y1="523" x2="1753.5" y2="537" stroke="#1818b8" stroke-width="1" shape-rendering="crispEdges"/><path d="M1751 536L1756 536L1753.5 541Z" fill="#1818b8"/><path d="M1777.5 484L1818 507.5L1777.5 531Z" fill="none" stroke="#1818b8"/><line x1="1818" y1="507.5" x2="1849" y2="507.5" stroke="#1818b8" stroke-width="1" shape-rendering="crispEdges"/><polyline points="1849,507 1874,507" fill="none" stroke="#008000" stroke-width="1" shape-rendering="crispEdges"/><text x="1537" y="601" font-family='"Liberation Sans", sans-serif' font-size="13" fill="#1818b8" font-weight="normal" font-style="normal" text-anchor="start" textLength="145" lengthAdjust="spacingAndGlyphs">IEC A-Weighting filter</text><text x="1850" y="505" font-family='"Liberation Sans", sans-serif' font-size="13" fill="#1818b8" font-weight="normal" font-style="normal" text-anchor="start" textLength="135" lengthAdjust="spacingAndGlyphs">IEC-A-Weighted-OUT</text><circle cx="81.5" cy="403.5" r="4" fill="#ff0000"/><circle cx="265.5" cy="403.5" r="4" fill="#ff0000"/><circle cx="313.5" cy="403.5" r="4" fill="#ff0000"/><circle cx="369.5" cy="307.5" r="4" fill="#ff0000"/><circle cx="369.5" cy="371.5" r="4" fill="#ff0000"/><circle cx="457.5" cy="419.5" r="4" fill="#ff0000"/><circle cx="569.5" cy="355.5" r="4" fill="#ff0000"/><circle cx="569.5" cy="371.5" r="4" fill="#ff0000"/><circle cx="569.5" cy="212.5" r="4" fill="#ff0000"/><circle cx="521.5" cy="499.5" r="4" fill="#ff0000"/><circle cx="521.5" cy="643.5" r="4" fill="#ff0000"/><circle cx="657.5" cy="403.5" r="4" fill="#ff0000"/><circle cx="713.5" cy="403.5" r="4" fill="#ff0000"/><circle cx="769.5" cy="212.5" r="4" fill="#ff0000"/><circle cx="785.5" cy="330.5" r="4" fill="#ff0000"/><circle cx="873.5" cy="212.5" r="4" fill="#ff0000"/><circle cx="873.5" cy="283.5" r="4" fill="#ff0000"/><circle cx="841.5" cy="403.5" r="4" fill="#ff0000"/><circle cx="985.5" cy="403.5" r="4" fill="#ff0000"/><circle cx="985.5" cy="451.5" r="4" fill="#ff0000"/><circle cx="1073.5" cy="403.5" r="4" fill="#ff0000"/><circle cx="1105.5" cy="212.5" r="4" fill="#ff0000"/><circle cx="1041.5" cy="283.5" r="4" fill="#ff0000"/><circle cx="1105.5" cy="331.5" r="4" fill="#ff0000"/><circle cx="1105.5" cy="371.5" r="4" fill="#ff0000"/><circle cx="1185.5" cy="371.5" r="4" fill="#ff0000"/><circle cx="1409.5" cy="371.5" r="4" fill="#ff0000"/><circle cx="1249.5" cy="467.5" r="4" fill="#ff0000"/><circle cx="1105.5" cy="563.5" r="4" fill="#ff0000"/><circle cx="1217.5" cy="563.5" r="4" fill="#ff0000"/><circle cx="1057.5" cy="643.5" r="4" fill="#ff0000"/><circle cx="1209.5" cy="755.5" r="4" fill="#ff0000"/><circle cx="1345.5" cy="731.5" r="4" fill="#ff0000"/><circle cx="1409.5" cy="779.5" r="4" fill="#ff0000"/><circle cx="1441.5" cy="371.5" r="4" fill="#ff0000"/><circle cx="1521.5" cy="371.5" r="4" fill="#ff0000"/><circle cx="1697.5" cy="371.5" r="4" fill="#ff0000"/><circle cx="1761.5" cy="371.5" r="4" fill="#ff0000"/><circle cx="1489.5" cy="507.5" r="4" fill="#ff0000"/><circle cx="1537.5" cy="507.5" r="4" fill="#ff0000"/><circle cx="1585.5" cy="507.5" r="4" fill="#ff0000"/><circle cx="1633.5" cy="507.5" r="4" fill="#ff0000"/><circle cx="1729.5" cy="507.5" r="4" fill="#ff0000"/><circle cx="1761.5" cy="507.5" r="4" fill="#ff0000"/><circle cx="1849.5" cy="507.5" r="4" fill="#ff0000"/><rect x="220.5" y="372.5" width="53" height="18" fill="#ffffff" stroke="#10108c" stroke-width="1" shape-rendering="crispEdges"/><text x="222.5" y="386" font-family='"Liberation Sans", sans-serif' font-size="16" fill="#1818b8" font-weight="normal" font-style="normal" text-anchor="start">9.265p</text><rect x="25.5" y="415.5" width="53" height="19" fill="#ffffff" stroke="#10108c" stroke-width="1" shape-rendering="crispEdges"/><text x="27.5" y="430" font-family='"Liberation Sans", sans-serif' font-size="16" fill="#1818b8" font-weight="normal" font-style="normal" text-anchor="start">9.265p</text><rect x="225.5" y="416.5" width="12" height="19" fill="#ffffff" stroke="#10108c" stroke-width="1" shape-rendering="crispEdges"/><text x="227.5" y="431" font-family='"Liberation Sans", sans-serif' font-size="16" fill="#1818b8" font-weight="normal" font-style="normal" text-anchor="start">0</text><rect x="326.5" y="424.5" width="65" height="19" fill="#ffffff" stroke="#10108c" stroke-width="1" shape-rendering="crispEdges"/><text x="328.5" y="439" font-family='"Liberation Sans", sans-serif' font-size="16" fill="#1818b8" font-weight="normal" font-style="normal" text-anchor="start">111.185f</text><rect x="334.5" y="271.5" width="57" height="19" fill="#ffffff" stroke="#10108c" stroke-width="1" shape-rendering="crispEdges"/><text x="336.5" y="286" font-family='"Liberation Sans", sans-serif' font-size="16" fill="#1818b8" font-weight="normal" font-style="normal" text-anchor="start">5.956m</text><rect x="581.5" y="174.5" width="12" height="19" fill="#ffffff" stroke="#10108c" stroke-width="1" shape-rendering="crispEdges"/><text x="583.5" y="189" font-family='"Liberation Sans", sans-serif' font-size="16" fill="#1818b8" font-weight="normal" font-style="normal" text-anchor="start">0</text><rect x="527.5" y="249.5" width="57" height="19" fill="#ffffff" stroke="#10108c" stroke-width="1" shape-rendering="crispEdges"/><text x="529.5" y="264" font-family='"Liberation Sans", sans-serif' font-size="16" fill="#1818b8" font-weight="normal" font-style="normal" text-anchor="start">5.958m</text><rect x="457.5" y="475.5" width="64" height="19" fill="#ffffff" stroke="#10108c" stroke-width="1" shape-rendering="crispEdges"/><text x="459.5" y="490" font-family='"Liberation Sans", sans-serif' font-size="16" fill="#1818b8" font-weight="normal" font-style="normal" text-anchor="start">11.908m</text><rect x="505.5" y="462.5" width="56" height="19" fill="#ffffff" stroke="#10108c" stroke-width="1" shape-rendering="crispEdges"/><text x="507.5" y="477" font-family='"Liberation Sans", sans-serif' font-size="16" fill="#1818b8" font-weight="normal" font-style="normal" text-anchor="start">1.118m</text><rect x="481.5" y="500.5" width="62" height="18" fill="#ffffff" stroke="#10108c" stroke-width="1" shape-rendering="crispEdges"/><text x="483.5" y="514" font-family='"Liberation Sans", sans-serif' font-size="16" fill="#1818b8" font-weight="normal" font-style="normal" text-anchor="start">71.676u</text><rect x="542.5" y="515.5" width="57" height="18" fill="#ffffff" stroke="#10108c" stroke-width="1" shape-rendering="crispEdges"/><text x="544.5" y="529" font-family='"Liberation Sans", sans-serif' font-size="16" fill="#1818b8" font-weight="normal" font-style="normal" text-anchor="start">1.047m</text><rect x="457.5" y="523.5" width="56" height="19" fill="#ffffff" stroke="#10108c" stroke-width="1" shape-rendering="crispEdges"/><text x="459.5" y="538" font-family='"Liberation Sans", sans-serif' font-size="16" fill="#1818b8" font-weight="normal" font-style="normal" text-anchor="start">11.98m</text><rect x="465.5" y="558.5" width="56" height="19" fill="#ffffff" stroke="#10108c" stroke-width="1" shape-rendering="crispEdges"/><text x="467.5" y="573" font-family='"Liberation Sans", sans-serif' font-size="16" fill="#1818b8" font-weight="normal" font-style="normal" text-anchor="start">11.98m</text><rect x="622.5" y="415.5" width="62" height="18" fill="#ffffff" stroke="#10108c" stroke-width="1" shape-rendering="crispEdges"/><text x="624.5" y="429" font-family='"Liberation Sans", sans-serif' font-size="16" fill="#1818b8" font-weight="normal" font-style="normal" text-anchor="start">10.363u</text><rect x="769.5" y="283.5" width="71" height="18" fill="#ffffff" stroke="#10108c" stroke-width="1" shape-rendering="crispEdges"/><text x="771.5" y="297" font-family='"Liberation Sans", sans-serif' font-size="16" fill="#1818b8" font-weight="normal" font-style="normal" text-anchor="start">964.394u</text><rect x="745.5" y="308.5" width="53" height="18" fill="#ffffff" stroke="#10108c" stroke-width="1" shape-rendering="crispEdges"/><text x="747.5" y="322" font-family='"Liberation Sans", sans-serif' font-size="16" fill="#1818b8" font-weight="normal" font-style="normal" text-anchor="start">3.241u</text><rect x="769.5" y="332.5" width="71" height="18" fill="#ffffff" stroke="#10108c" stroke-width="1" shape-rendering="crispEdges"/><text x="771.5" y="346" font-family='"Liberation Sans", sans-serif' font-size="16" fill="#1818b8" font-weight="normal" font-style="normal" text-anchor="start">967.635u</text><rect x="750.5" y="503.5" width="57" height="19" fill="#ffffff" stroke="#10108c" stroke-width="1" shape-rendering="crispEdges"/><text x="752.5" y="518" font-family='"Liberation Sans", sans-serif' font-size="16" fill="#1818b8" font-weight="normal" font-style="normal" text-anchor="start">1.796m</text><rect x="835.5" y="215.5" width="70" height="18" fill="#ffffff" stroke="#10108c" stroke-width="1" shape-rendering="crispEdges"/><text x="837.5" y="229" font-family='"Liberation Sans", sans-serif' font-size="16" fill="#1818b8" font-weight="normal" font-style="normal" text-anchor="start">762.631u</text><rect x="873.5" y="283.5" width="71" height="18" fill="#ffffff" stroke="#10108c" stroke-width="1" shape-rendering="crispEdges"/><text x="875.5" y="297" font-family='"Liberation Sans", sans-serif' font-size="16" fill="#1818b8" font-weight="normal" font-style="normal" text-anchor="start">825.489u</text><rect x="897.5" y="308.5" width="53" height="18" fill="#ffffff" stroke="#10108c" stroke-width="1" shape-rendering="crispEdges"/><text x="899.5" y="322" font-family='"Liberation Sans", sans-serif' font-size="16" fill="#1818b8" font-weight="normal" font-style="normal" text-anchor="start">2.832u</text><rect x="873.5" y="332.5" width="71" height="18" fill="#ffffff" stroke="#10108c" stroke-width="1" shape-rendering="crispEdges"/><text x="875.5" y="346" font-family='"Liberation Sans", sans-serif' font-size="16" fill="#1818b8" font-weight="normal" font-style="normal" text-anchor="start">828.321u</text><rect x="857.5" y="371.5" width="53" height="18" fill="#ffffff" stroke="#10108c" stroke-width="1" shape-rendering="crispEdges"/><text x="859.5" y="385" font-family='"Liberation Sans", sans-serif' font-size="16" fill="#1818b8" font-weight="normal" font-style="normal" text-anchor="start">1.623n</text><rect x="883.5" y="419.5" width="12" height="19" fill="#ffffff" stroke="#10108c" stroke-width="1" shape-rendering="crispEdges"/><text x="885.5" y="434" font-family='"Liberation Sans", sans-serif' font-size="16" fill="#1818b8" font-weight="normal" font-style="normal" text-anchor="start">0</text><rect x="934.5" y="456.5" width="12" height="19" fill="#ffffff" stroke="#10108c" stroke-width="1" shape-rendering="crispEdges"/><text x="936.5" y="471" font-family='"Liberation Sans", sans-serif' font-size="16" fill="#1818b8" font-weight="normal" font-style="normal" text-anchor="start">0</text><rect x="988.5" y="371.5" width="53" height="19" fill="#ffffff" stroke="#10108c" stroke-width="1" shape-rendering="crispEdges"/><text x="990.5" y="386" font-family='"Liberation Sans", sans-serif' font-size="16" fill="#1818b8" font-weight="normal" font-style="normal" text-anchor="start">1.623n</text><rect x="1030.5" y="456.5" width="12" height="19" fill="#ffffff" stroke="#10108c" stroke-width="1" shape-rendering="crispEdges"/><text x="1032.5" y="471" font-family='"Liberation Sans", sans-serif' font-size="16" fill="#1818b8" font-weight="normal" font-style="normal" text-anchor="start">0</text><rect x="1227.5" y="166.5" width="66" height="19" fill="#ffffff" stroke="#10108c" stroke-width="1" shape-rendering="crispEdges"/><text x="1229.5" y="181" font-family='"Liberation Sans", sans-serif' font-size="16" fill="#1818b8" font-weight="normal" font-style="normal" text-anchor="start">23.934m</text><rect x="1116.5" y="216.5" width="66" height="18" fill="#ffffff" stroke="#10108c" stroke-width="1" shape-rendering="crispEdges"/><text x="1118.5" y="230" font-family='"Liberation Sans", sans-serif' font-size="16" fill="#1818b8" font-weight="normal" font-style="normal" text-anchor="start">10.293m</text><rect x="1105.5" y="259.5" width="66" height="19" fill="#ffffff" stroke="#10108c" stroke-width="1" shape-rendering="crispEdges"/><text x="1107.5" y="274" font-family='"Liberation Sans", sans-serif' font-size="16" fill="#1818b8" font-weight="normal" font-style="normal" text-anchor="start">10.293m</text><rect x="1000.5" y="284.5" width="12" height="18" fill="#ffffff" stroke="#10108c" stroke-width="1" shape-rendering="crispEdges"/><text x="1002.5" y="298" font-family='"Liberation Sans", sans-serif' font-size="16" fill="#1818b8" font-weight="normal" font-style="normal" text-anchor="start">0</text><rect x="1081.5" y="283.5" width="62" height="19" fill="#ffffff" stroke="#10108c" stroke-width="1" shape-rendering="crispEdges"/><text x="1083.5" y="298" font-family='"Liberation Sans", sans-serif' font-size="16" fill="#1818b8" font-weight="normal" font-style="normal" text-anchor="start">62.857u</text><rect x="1105.5" y="307.5" width="57" height="19" fill="#ffffff" stroke="#10108c" stroke-width="1" shape-rendering="crispEdges"/><text x="1107.5" y="322" font-family='"Liberation Sans", sans-serif' font-size="16" fill="#1818b8" font-weight="normal" font-style="normal" text-anchor="start">10.23m</text><rect x="1105.5" y="444.5" width="57" height="18" fill="#ffffff" stroke="#10108c" stroke-width="1" shape-rendering="crispEdges"/><text x="1107.5" y="458" font-family='"Liberation Sans", sans-serif' font-size="16" fill="#1818b8" font-weight="normal" font-style="normal" text-anchor="start">10.23m</text><rect x="1129.5" y="467.5" width="62" height="18" fill="#ffffff" stroke="#10108c" stroke-width="1" shape-rendering="crispEdges"/><text x="1131.5" y="481" font-family='"Liberation Sans", sans-serif' font-size="16" fill="#1818b8" font-weight="normal" font-style="normal" text-anchor="start">61.679u</text><rect x="1105.5" y="492.5" width="73" height="18" fill="#ffffff" stroke="#10108c" stroke-width="1" shape-rendering="crispEdges"/><text x="1107.5" y="506" font-family='"Liberation Sans", sans-serif' font-size="16" fill="#1818b8" font-weight="normal" font-style="normal" text-anchor="start">10.291m</text><rect x="1263.5" y="427.5" width="71" height="18" fill="#ffffff" stroke="#10108c" stroke-width="1" shape-rendering="crispEdges"/><text x="1265.5" y="441" font-family='"Liberation Sans", sans-serif' font-size="16" fill="#1818b8" font-weight="normal" font-style="normal" text-anchor="start">624.314u</text><rect x="1270.5" y="483.5" width="71" height="18" fill="#ffffff" stroke="#10108c" stroke-width="1" shape-rendering="crispEdges"/><text x="1272.5" y="497" font-family='"Liberation Sans", sans-serif' font-size="16" fill="#1818b8" font-weight="normal" font-style="normal" text-anchor="start">562.636u</text><rect x="1235.5" y="577.5" width="66" height="18" fill="#ffffff" stroke="#10108c" stroke-width="1" shape-rendering="crispEdges"/><text x="1237.5" y="591" font-family='"Liberation Sans", sans-serif' font-size="16" fill="#1818b8" font-weight="normal" font-style="normal" text-anchor="start">23.881m</text><rect x="1070.5" y="654.5" width="11" height="19" fill="#ffffff" stroke="#10108c" stroke-width="1" shape-rendering="crispEdges"/><text x="1072.5" y="669" font-family='"Liberation Sans", sans-serif' font-size="16" fill="#1818b8" font-weight="normal" font-style="normal" text-anchor="start">0</text><rect x="1142.5" y="703.5" width="62" height="18" fill="#ffffff" stroke="#10108c" stroke-width="1" shape-rendering="crispEdges"/><text x="1144.5" y="717" font-family='"Liberation Sans", sans-serif' font-size="16" fill="#1818b8" font-weight="normal" font-style="normal" text-anchor="start">10.365u</text><rect x="1219.5" y="691.5" width="12" height="19" fill="#ffffff" stroke="#10108c" stroke-width="1" shape-rendering="crispEdges"/><text x="1221.5" y="706" font-family='"Liberation Sans", sans-serif' font-size="16" fill="#1818b8" font-weight="normal" font-style="normal" text-anchor="start">0</text><rect x="1323.5" y="662.5" width="39" height="18" fill="#ffffff" stroke="#10108c" stroke-width="1" shape-rendering="crispEdges"/><text x="1325.5" y="676" font-family='"Liberation Sans", sans-serif' font-size="16" fill="#1818b8" font-weight="normal" font-style="normal" text-anchor="start">997u</text><rect x="1323.5" y="800.5" width="62" height="18" fill="#ffffff" stroke="#10108c" stroke-width="1" shape-rendering="crispEdges"/><text x="1325.5" y="814" font-family='"Liberation Sans", sans-serif' font-size="16" fill="#1818b8" font-weight="normal" font-style="normal" text-anchor="start">996.95u</text><rect x="1357.5" y="792.5" width="12" height="18" fill="#ffffff" stroke="#10108c" stroke-width="1" shape-rendering="crispEdges"/><text x="1359.5" y="806" font-family='"Liberation Sans", sans-serif' font-size="16" fill="#1818b8" font-weight="normal" font-style="normal" text-anchor="start">0</text><rect x="1363.5" y="701.5" width="62" height="18" fill="#ffffff" stroke="#10108c" stroke-width="1" shape-rendering="crispEdges"/><text x="1365.5" y="715" font-family='"Liberation Sans", sans-serif' font-size="16" fill="#1818b8" font-weight="normal" font-style="normal" text-anchor="start">12.977p</text><rect x="1455.5" y="758.5" width="62" height="18" fill="#ffffff" stroke="#10108c" stroke-width="1" shape-rendering="crispEdges"/><text x="1457.5" y="772" font-family='"Liberation Sans", sans-serif' font-size="16" fill="#1818b8" font-weight="normal" font-style="normal" text-anchor="start">12.977p</text><rect x="1352.5" y="292.5" width="62" height="18" fill="#ffffff" stroke="#10108c" stroke-width="1" shape-rendering="crispEdges"/><text x="1354.5" y="306" font-family='"Liberation Sans", sans-serif' font-size="16" fill="#1818b8" font-weight="normal" font-style="normal" text-anchor="start">14.683p</text><rect x="1484.5" y="269.5" width="44" height="19" fill="#ffffff" stroke="#10108c" stroke-width="1" shape-rendering="crispEdges"/><text x="1486.5" y="284" font-family='"Liberation Sans", sans-serif' font-size="16" fill="#1818b8" font-weight="normal" font-style="normal" text-anchor="start">1.16p</text><rect x="1710.5" y="405.5" width="12" height="18" fill="#ffffff" stroke="#10108c" stroke-width="1" shape-rendering="crispEdges"/><text x="1712.5" y="419" font-family='"Liberation Sans", sans-serif' font-size="16" fill="#1818b8" font-weight="normal" font-style="normal" text-anchor="start">0</text><rect x="1450.5" y="446.5" width="12" height="18" fill="#ffffff" stroke="#10108c" stroke-width="1" shape-rendering="crispEdges"/><text x="1452.5" y="460" font-family='"Liberation Sans", sans-serif' font-size="16" fill="#1818b8" font-weight="normal" font-style="normal" text-anchor="start">0</text><rect x="1502.5" y="446.5" width="12" height="18" fill="#ffffff" stroke="#10108c" stroke-width="1" shape-rendering="crispEdges"/><text x="1504.5" y="460" font-family='"Liberation Sans", sans-serif' font-size="16" fill="#1818b8" font-weight="normal" font-style="normal" text-anchor="start">0</text><rect x="1552.5" y="440.5" width="12" height="19" fill="#ffffff" stroke="#10108c" stroke-width="1" shape-rendering="crispEdges"/><text x="1554.5" y="455" font-family='"Liberation Sans", sans-serif' font-size="16" fill="#1818b8" font-weight="normal" font-style="normal" text-anchor="start">0</text><rect x="1605.5" y="424.5" width="12" height="19" fill="#ffffff" stroke="#10108c" stroke-width="1" shape-rendering="crispEdges"/><text x="1607.5" y="439" font-family='"Liberation Sans", sans-serif' font-size="16" fill="#1818b8" font-weight="normal" font-style="normal" text-anchor="start">0</text><rect x="1652.5" y="424.5" width="12" height="18" fill="#ffffff" stroke="#10108c" stroke-width="1" shape-rendering="crispEdges"/><text x="1654.5" y="438" font-family='"Liberation Sans", sans-serif' font-size="16" fill="#1818b8" font-weight="normal" font-style="normal" text-anchor="start">0</text><rect x="1748.5" y="446.5" width="12" height="18" fill="#ffffff" stroke="#10108c" stroke-width="1" shape-rendering="crispEdges"/><text x="1750.5" y="460" font-family='"Liberation Sans", sans-serif' font-size="16" fill="#1818b8" font-weight="normal" font-style="normal" text-anchor="start">0</text><rect x="1440.5" y="520.5" width="12" height="19" fill="#ffffff" stroke="#10108c" stroke-width="1" shape-rendering="crispEdges"/><text x="1442.5" y="535" font-family='"Liberation Sans", sans-serif' font-size="16" fill="#1818b8" font-weight="normal" font-style="normal" text-anchor="start">0</text><rect x="1512.5" y="583.5" width="12" height="19" fill="#ffffff" stroke="#10108c" stroke-width="1" shape-rendering="crispEdges"/><text x="1514.5" y="598" font-family='"Liberation Sans", sans-serif' font-size="16" fill="#1818b8" font-weight="normal" font-style="normal" text-anchor="start">0</text><rect x="1560.5" y="582.5" width="12" height="19" fill="#ffffff" stroke="#10108c" stroke-width="1" shape-rendering="crispEdges"/><text x="1562.5" y="597" font-family='"Liberation Sans", sans-serif' font-size="16" fill="#1818b8" font-weight="normal" font-style="normal" text-anchor="start">0</text><rect x="1626.5" y="584.5" width="12" height="18" fill="#ffffff" stroke="#10108c" stroke-width="1" shape-rendering="crispEdges"/><text x="1628.5" y="598" font-family='"Liberation Sans", sans-serif' font-size="16" fill="#1818b8" font-weight="normal" font-style="normal" text-anchor="start">0</text><rect x="1717.5" y="580.5" width="12" height="19" fill="#ffffff" stroke="#10108c" stroke-width="1" shape-rendering="crispEdges"/><text x="1719.5" y="595" font-family='"Liberation Sans", sans-serif' font-size="16" fill="#1818b8" font-weight="normal" font-style="normal" text-anchor="start">0</text><text x="10" y="367" font-family='"Liberation Sans", sans-serif' font-size="20" fill="#1818b8" font-weight="normal" font-style="normal" text-anchor="start" textLength="85" lengthAdjust="spacingAndGlyphs" stroke="#1818b8" stroke-width="0.25">MC head</text><text x="82" y="400" font-family='"Liberation Sans", sans-serif' font-size="20" fill="#1818b8" font-weight="normal" font-style="normal" text-anchor="start" textLength="61" lengthAdjust="spacingAndGlyphs" stroke="#1818b8" stroke-width="0.3">INPUT</text><text x="1410" y="367" font-family='"Liberation Sans", sans-serif' font-size="20" fill="#1818b8" font-weight="normal" font-style="normal" text-anchor="start" textLength="80" lengthAdjust="spacingAndGlyphs">OUTPUT</text><text x="10" y="759" font-family='"Liberation Sans", sans-serif' font-size="19" fill="#1818b8" font-weight="normal" font-style="italic" text-anchor="start" textLength="452" lengthAdjust="spacingAndGlyphs" stroke="#1818b8" stroke-width="0.2">Phonopreamp "Cy-XXI" v.8_forMC_05/08/23</text><text x="10" y="809" font-family='"Liberation Sans", sans-serif' font-size="19" fill="#1818b8" font-weight="normal" font-style="italic" text-anchor="start" textLength="622" lengthAdjust="spacingAndGlyphs" stroke="#1818b8" stroke-width="0.2">Версия для МС головок. Отработана конкретно для головки</text><text x="10" y="833" font-family='"Liberation Sans", sans-serif' font-size="19" fill="#1818b8" font-weight="normal" font-style="italic" text-anchor="start" textLength="503" lengthAdjust="spacingAndGlyphs" stroke="#1818b8" stroke-width="0.2">Benz Micro MC Glider L2 (0.4 mV 12 ohms 75 uH)</text><text x="10" y="884" font-family='"Liberation Sans", sans-serif' font-size="19" fill="#1818b8" font-weight="normal" font-style="italic" text-anchor="start" textLength="635" lengthAdjust="spacingAndGlyphs" stroke="#1818b8" stroke-width="0.2">Характеристики: Ku1kHz=68 dB, noise -74 dBA (ref. 0.4 mV),</text></g><rect x="1893" y="118" width="20" height="776" fill="url(#pDot)" stroke="none" stroke-width="1" shape-rendering="crispEdges"/><rect x="1893" y="122" width="20" height="23" fill="#efefef"/><path d="M1893.5 144V122.5H1912" fill="none" stroke="#ffffff"/><path d="M1893 144.5H1912.5V122" fill="none" stroke="#6a6a6a"/><path d="M1894 143.5H1911.5V123" fill="none" stroke="#a8a8a8"/><path d="M1898 136h9l-4.5-5z" fill="#000"/><rect x="1893" y="151" width="20" height="109" fill="#efefef"/><path d="M1893.5 259V151.5H1912" fill="none" stroke="#ffffff"/><path d="M1893 259.5H1912.5V151" fill="none" stroke="#6a6a6a"/><path d="M1894 258.5H1911.5V152" fill="none" stroke="#a8a8a8"/><rect x="1893" y="875" width="20" height="19" fill="#efefef"/><path d="M1893.5 893V875.5H1912" fill="none" stroke="#ffffff"/><path d="M1893 893.5H1912.5V875" fill="none" stroke="#6a6a6a"/><path d="M1894 892.5H1911.5V876" fill="none" stroke="#a8a8a8"/><path d="M1898 883h9l-4.5 5z" fill="#000"/><rect x="5" y="894" width="1908" height="47" fill="#f0f0f0" stroke="none" stroke-width="1" shape-rendering="crispEdges"/><rect x="12" y="894" width="20" height="20" fill="#efefef"/><path d="M12.5 913V894.5H31" fill="none" stroke="#ffffff"/><path d="M12 913.5H31.5V894" fill="none" stroke="#6a6a6a"/><path d="M13 912.5H30.5V895" fill="none" stroke="#a8a8a8"/><rect x="32" y="894" width="20" height="20" fill="#efefef"/><path d="M32.5 913V894.5H51" fill="none" stroke="#ffffff"/><path d="M32 913.5H51.5V894" fill="none" stroke="#6a6a6a"/><path d="M33 912.5H50.5V895" fill="none" stroke="#a8a8a8"/><rect x="52" y="894" width="20" height="20" fill="#efefef"/><path d="M52.5 913V894.5H71" fill="none" stroke="#ffffff"/><path d="M52 913.5H71.5V894" fill="none" stroke="#6a6a6a"/><path d="M53 912.5H70.5V895" fill="none" stroke="#a8a8a8"/><rect x="72" y="894" width="20" height="20" fill="#efefef"/><path d="M72.5 913V894.5H91" fill="none" stroke="#ffffff"/><path d="M72 913.5H91.5V894" fill="none" stroke="#6a6a6a"/><path d="M73 912.5H90.5V895" fill="none" stroke="#a8a8a8"/><rect x="92" y="894" width="20" height="20" fill="#efefef"/><path d="M92.5 913V894.5H111" fill="none" stroke="#ffffff"/><path d="M92 913.5H111.5V894" fill="none" stroke="#6a6a6a"/><path d="M93 912.5H110.5V895" fill="none" stroke="#a8a8a8"/><path d="M17 902h9l-4.5 5z" fill="#000"/><path d="M37 899v10M43 899v10l-6-5z" stroke="#000" fill="#000" stroke-width="1.3"/><path d="M64 899v10l-6-5z" fill="#000"/><path d="M79 899v10l6-5z" fill="#000"/><path d="M98 899v10l6-5zM105 899v10" stroke="#000" fill="#000" stroke-width="1.3"/><rect x="12" y="917" width="20" height="20" fill="#efefef"/><path d="M12.5 936V917.5H31" fill="none" stroke="#ffffff"/><path d="M12 936.5H31.5V917" fill="none" stroke="#6a6a6a"/><path d="M13 935.5H30.5V918" fill="none" stroke="#a8a8a8"/><rect x="32" y="917" width="20" height="20" fill="#efefef"/><path d="M32.5 936V917.5H51" fill="none" stroke="#ffffff"/><path d="M32 936.5H51.5V917" fill="none" stroke="#6a6a6a"/><path d="M33 935.5H50.5V918" fill="none" stroke="#a8a8a8"/><rect x="52" y="917" width="20" height="20" fill="#efefef"/><path d="M52.5 936V917.5H71" fill="none" stroke="#ffffff"/><path d="M52 936.5H71.5V917" fill="none" stroke="#6a6a6a"/><path d="M53 935.5H70.5V918" fill="none" stroke="#a8a8a8"/><rect x="72" y="917" width="20" height="20" fill="#efefef"/><path d="M72.5 936V917.5H91" fill="none" stroke="#ffffff"/><path d="M72 936.5H91.5V917" fill="none" stroke="#6a6a6a"/><path d="M73 935.5H90.5V918" fill="none" stroke="#a8a8a8"/><rect x="92" y="917" width="20" height="20" fill="#efefef"/><path d="M92.5 936V917.5H111" fill="none" stroke="#ffffff"/><path d="M92 936.5H111.5V917" fill="none" stroke="#6a6a6a"/><path d="M93 935.5H110.5V918" fill="none" stroke="#a8a8a8"/><path d="M17 925h9l-4.5 5z" fill="#000"/><path d="M37 922v10M43 922v10l-6-5z" stroke="#000" fill="#000" stroke-width="1.3"/><path d="M64 922v10l-6-5z" fill="#000"/><path d="M79 922v10l6-5z" fill="#000"/><path d="M98 922v10l6-5zM105 922v10" stroke="#000" fill="#000" stroke-width="1.3"/><line x1="11" y1="914.5" x2="112" y2="914.5" stroke="#808080" stroke-width="2" shape-rendering="crispEdges"/><line x1="11" y1="936.5" x2="112" y2="936.5" stroke="#808080" stroke-width="2" shape-rendering="crispEdges"/><path d="M112 894.5H532" stroke="#1a1a1a"/><path d="M112 894L122 913H156L166 894" fill="#f4f4f4" stroke="#1a1a1a"/><path d="M166.5 894L161.5 903.5L166.5 913H199L202.5 903.5L199 894" fill="none" stroke="#1a1a1a"/><path d="M201 894L207.5 913H262L266 903.5L262.5 894" fill="none" stroke="#1a1a1a"/><path d="M262.5 894L269 913H380L384 903.5L380 894" fill="none" stroke="#1a1a1a"/><path d="M381 894L387.5 913H415L423.5 894" fill="none" stroke="#1a1a1a"/><text x="123" y="908" font-family='"Liberation Sans", sans-serif' font-size="14" fill="#000" font-weight="bold" font-style="normal" text-anchor="start" textLength="33" lengthAdjust="spacingAndGlyphs">Main</text><text x="171" y="908" font-family='"Liberation Sans", sans-serif' font-size="14" fill="#222" font-weight="normal" font-style="normal" text-anchor="start" textLength="26" lengthAdjust="spacingAndGlyphs">Text</text><text x="211" y="908" font-family='"Liberation Sans", sans-serif' font-size="14" fill="#222" font-weight="normal" font-style="normal" text-anchor="start" textLength="45" lengthAdjust="spacingAndGlyphs">Models</text><text x="277.5" y="908" font-family='"Liberation Sans", sans-serif' font-size="14" fill="#222" font-weight="normal" font-style="normal" text-anchor="start" textLength="93" lengthAdjust="spacingAndGlyphs">Power Supplies</text><text x="391" y="908" font-family='"Liberation Sans", sans-serif' font-size="14" fill="#222" font-weight="normal" font-style="normal" text-anchor="start" textLength="21" lengthAdjust="spacingAndGlyphs">Info</text><rect x="532.5" y="894.5" width="4" height="19" fill="#fff" stroke="#333"/><rect x="537" y="894" width="21" height="20" fill="#efefef"/><path d="M537.5 913V894.5H557" fill="none" stroke="#ffffff"/><path d="M537 913.5H557.5V894" fill="none" stroke="#6a6a6a"/><path d="M538 912.5H556.5V895" fill="none" stroke="#a8a8a8"/><path d="M550 899v10l-6-5z" fill="#000"/><rect x="558" y="894" width="1315" height="20" fill="url(#pDot)" stroke="none" stroke-width="1" shape-rendering="crispEdges"/><rect x="581" y="894" width="611" height="20" fill="#efefef"/><path d="M581.5 913V894.5H1191" fill="none" stroke="#ffffff"/><path d="M581 913.5H1191.5V894" fill="none" stroke="#6a6a6a"/><path d="M582 912.5H1190.5V895" fill="none" stroke="#a8a8a8"/><rect x="1873" y="894" width="20" height="20" fill="#efefef"/><path d="M1873.5 913V894.5H1892" fill="none" stroke="#ffffff"/><path d="M1873 913.5H1892.5V894" fill="none" stroke="#6a6a6a"/><path d="M1874 912.5H1891.5V895" fill="none" stroke="#a8a8a8"/><path d="M1881 899v10l6-5z" fill="#000"/><line x1="5" y1="916.5" x2="1913" y2="916.5" stroke="#000" stroke-width="1" shape-rendering="crispEdges"/><path d="M112 917L122 936H324.5L331.5 917" fill="#f4f4f4" stroke="#1a1a1a"/><path d="M333 917L328 926.5L333 936H412L416 926.5L412 917" fill="none" stroke="#1a1a1a"/><path d="M413 917L419.5 936H456L464 917" fill="none" stroke="#1a1a1a"/><text x="124.5" y="932" font-family='"Liberation Sans", sans-serif' font-size="14" fill="#000" font-weight="bold" font-style="normal" text-anchor="start" textLength="198" lengthAdjust="spacingAndGlyphs">ФК_Cy-XXI_v8-forMC_050723</text><text x="338.5" y="932" font-family='"Liberation Sans", sans-serif' font-size="14" fill="#222" font-weight="normal" font-style="normal" text-anchor="start" textLength="71" lengthAdjust="spacingAndGlyphs">ITU-R-ARM</text><text x="426.5" y="932" font-family='"Liberation Sans", sans-serif' font-size="14" fill="#222" font-weight="normal" font-style="normal" text-anchor="start" textLength="29" lengthAdjust="spacingAndGlyphs">Amp</text><line x1="5" y1="937.5" x2="1913" y2="937.5" stroke="#e0e0e0" stroke-width="1" shape-rendering="crispEdges"/><line x1="0" y1="941.5" x2="1918" y2="941.5" stroke="#808080" stroke-width="1" shape-rendering="crispEdges"/><rect x="0" y="942" width="1920" height="33" fill="#f0f0f0" stroke="none" stroke-width="1" shape-rendering="crispEdges"/><rect x="3" y="944" width="213" height="23" fill="#f0f0f0"/><line x1="3" y1="966.5" x2="216" y2="966.5" stroke="#8a8a8a" stroke-width="2" shape-rendering="crispEdges"/><line x1="215.5" y1="944" x2="215.5" y2="967" stroke="#b0b0b0" stroke-width="1" shape-rendering="crispEdges"/><text x="9" y="961" font-family='"Liberation Sans", sans-serif' font-size="13" fill="#202020" font-weight="normal" font-style="normal" text-anchor="start" textLength="200" lengthAdjust="spacingAndGlyphs">ФК_Cy-XXI_v8-forMC_050723.CIR</text><path d="M216.5 965V942.5H425.5V965" fill="#f4f4f4" stroke="#a0a0a0"/><line x1="217" y1="964.5" x2="426" y2="964.5" stroke="#808080" stroke-width="2" shape-rendering="crispEdges"/><text x="222" y="959" font-family='"Liberation Sans", sans-serif' font-size="13" fill="#202020" font-weight="normal" font-style="normal" text-anchor="start" textLength="198" lengthAdjust="spacingAndGlyphs">ФК_Cy-XXI_v6-forMC_050922.CIR</text><line x1="0" y1="974.5" x2="1920" y2="974.5" stroke="#c0c0c0" stroke-width="1" shape-rendering="crispEdges"/><line x1="0" y1="975.5" x2="1920" y2="975.5" stroke="#ffffff" stroke-width="1" shape-rendering="crispEdges"/><rect x="0" y="976" width="1920" height="42" fill="#f0f0f0" stroke="none" stroke-width="1" shape-rendering="crispEdges"/><rect x="15" y="979" width="1897" height="33" fill="#ffffff" stroke="none" stroke-width="1" shape-rendering="crispEdges"/><path d="M5 983l5 5M10 983l-5 5" stroke="#000" stroke-width="1.4"/><path d="M5.5 994v19M8.5 994v19" stroke="#a0a0a0"/><line x1="0" y1="1014.5" x2="1920" y2="1014.5" stroke="#b0b0b0" stroke-width="1" shape-rendering="crispEdges"/><line x1="0" y1="1017.5" x2="1920" y2="1017.5" stroke="#c8c8c8" stroke-width="1" shape-rendering="crispEdges"/><rect x="0" y="1018" width="1920" height="27" fill="#f0f0f0" stroke="none" stroke-width="1" shape-rendering="crispEdges"/><path d="M0.5 1044V1019.5H258.5" fill="none" stroke="#a0a0a0"/><path d="M1 1044.5H258.5V1019" fill="none" stroke="#ffffff"/><path d="M263.5 1044V1019.5H1626.5" fill="none" stroke="#a0a0a0"/><path d="M264 1044.5H1626.5V1019" fill="none" stroke="#ffffff"/><path d="M1633.5 1044V1019.5H1760.5" fill="none" stroke="#a0a0a0"/><path d="M1634 1044.5H1760.5V1019" fill="none" stroke="#ffffff"/><path d="M1765.5 1044V1019.5H1919.5" fill="none" stroke="#a0a0a0"/><path d="M1766 1044.5H1919.5V1019" fill="none" stroke="#ffffff"/><text x="2" y="1039" font-family='"Liberation Sans", sans-serif' font-size="22" fill="#000" font-weight="normal" font-style="normal" text-anchor="start" textLength="125" lengthAdjust="spacingAndGlyphs">Select Mode</text><text x="265" y="1039" font-family='"Liberation Sans", sans-serif' font-size="22" fill="#000" font-weight="normal" font-style="normal" text-anchor="start" textLength="134" lengthAdjust="spacingAndGlyphs">Drawing area</text><text x="1635" y="1039" font-family='"Liberation Sans", sans-serif' font-size="22" fill="#000" font-weight="normal" font-style="normal" text-anchor="start" textLength="119" lengthAdjust="spacingAndGlyphs">Grid 100,82</text><rect x="0" y="1045" width="1920" height="35" fill="url(#gTask)" stroke="none" stroke-width="1" shape-rendering="crispEdges"/><line x1="0" y1="1045.5" x2="1920" y2="1045.5" stroke="#3a4a60" stroke-width="1" shape-rendering="crispEdges"/><line x1="0" y1="1046.5" x2="1920" y2="1046.5" stroke="#c8dbee" stroke-width="1" shape-rendering="crispEdges"/><rect x="1700" y="1046" width="220" height="34" fill="url(#gTray)" stroke="none" stroke-width="1" shape-rendering="crispEdges"/><circle cx="33" cy="1062" r="21" fill="url(#gOrb)" stroke="#1a3a5a" stroke-width="1"/><path d="M24 1055q4-2 8 0v6q-4-2-8 0z" fill="#f04020"/><path d="M33 1055q4 2 8 0v6q-4 2-8 0z" fill="#60c030"/><path d="M24 1063q4-2 8 0v6q-4-2-8 0z" fill="#2090f0"/><path d="M33 1063q4 2 8 0v6q-4 2-8 0z" fill="#f8c020"/><path d="M85 1056h8l2 2h10v14h-20z" fill="#e8c860" stroke="#a08040"/><rect x="86" y="1062" width="18" height="9" fill="#f8e8a0"/><rect x="88" y="1066" width="14" height="3" fill="#6aa0d0"/><circle cx="145" cy="1063" r="10" fill="#e03a2a"/><path d="M145 1063L153.7 1058A10 10 0 0 1 145 1073Z" fill="#f8c820"/><path d="M145 1063L145 1073A10 10 0 0 1 136.3 1058Z" fill="#30a040"/><circle cx="145" cy="1063" r="4.5" fill="#3a80e0" stroke="#fff" stroke-width="2"/><circle cx="195" cy="1063" r="8" fill="none" stroke="#3a9ae0" stroke-width="3"/><path d="M187 1063h14" stroke="#3a9ae0" stroke-width="2"/><path d="M184 1072q10-22 22-14" fill="none" stroke="#e0b030" stroke-width="1.8"/><rect x="235" y="1053" width="20" height="20" rx="2" fill="#1a7ae0"/><path d="M239 1069v-9h12v9M245 1060v9" fill="none" stroke="#fff" stroke-width="2.5"/><ellipse cx="295" cy="1063" rx="9" ry="10" fill="none" stroke="#e01a2a" stroke-width="5"/><rect x="322.5" y="1047.5" width="46" height="32" rx="3" fill="url(#gTaskBtn)" stroke="#6a80a0" stroke-opacity="0.8"/><rect x="372.5" y="1047.5" width="46" height="32" rx="3" fill="url(#gTaskBtn)" stroke="#6a80a0" stroke-opacity="0.8"/><rect x="422.5" y="1047.5" width="46" height="32" rx="3" fill="url(#gTaskBtn)" stroke="#6a80a0" stroke-opacity="0.8"/><rect x="472.5" y="1047.5" width="46" height="32" rx="3" fill="url(#gTaskBtn)" stroke="#6a80a0" stroke-opacity="0.8"/><path d="M337 1053h12l4 4v15h-16z" fill="#fff" stroke="#888"/><rect x="334" y="1057" width="8" height="10" fill="#d02020"/><path d="M344 1062h7M344 1066h7" stroke="#aaa"/><rect x="386.5" y="1053.5" width="18" height="18" fill="#3a4ab0" stroke="#1a2a70"/><rect x="390" y="1054" width="11" height="6" fill="#fff"/><rect x="389" y="1064" width="13" height="7" fill="#fff"/><path d="M391 1067h9" stroke="#e06040"/><circle cx="445" cy="1063" r="11" fill="#e0b020" stroke="#806010"/><circle cx="445" cy="1063" r="8" fill="#60b030"/><text x="445" y="1068" font-family='"Liberation Sans", sans-serif' font-size="11" fill="#8a1010" font-weight="bold" font-style="normal" text-anchor="middle">12</text><rect x="485.5" y="1053.5" width="19" height="19" fill="#0a2a40" stroke="#30a8f0"/><text x="495" y="1068" font-family='"Liberation Sans", sans-serif' font-size="11" fill="#50b8f8" font-weight="bold" font-style="normal" text-anchor="middle">Ps</text><text x="1747" y="1066" font-family='"Liberation Sans", sans-serif' font-size="13" fill="#f4f8fc" font-weight="normal" font-style="normal" text-anchor="start" textLength="20" lengthAdjust="spacingAndGlyphs">EN</text><path d="M1787 1067h11l-5.5-5z" fill="#f4f8fc" stroke="#506080" stroke-width="0.6"/><rect x="1818.5" y="1056.5" width="16" height="12" fill="#c8d8ea" stroke="#fff"/><rect x="1814.5" y="1054.5" width="5" height="8" fill="#fff" stroke="#445"/><path d="M1822 1072h10" stroke="#fff" stroke-width="2"/><text x="1861.5" y="1068" font-family='"Liberation Sans", sans-serif' font-size="14" fill="#f4f8fc" font-weight="normal" font-style="normal" text-anchor="start" textLength="27" lengthAdjust="spacingAndGlyphs">8:08</text><rect x="1906.5" y="1047.5" width="13" height="33" fill="#9ab0c8" stroke="#d8e4f0" stroke-opacity="0.8"/></svg>
</body></html>
